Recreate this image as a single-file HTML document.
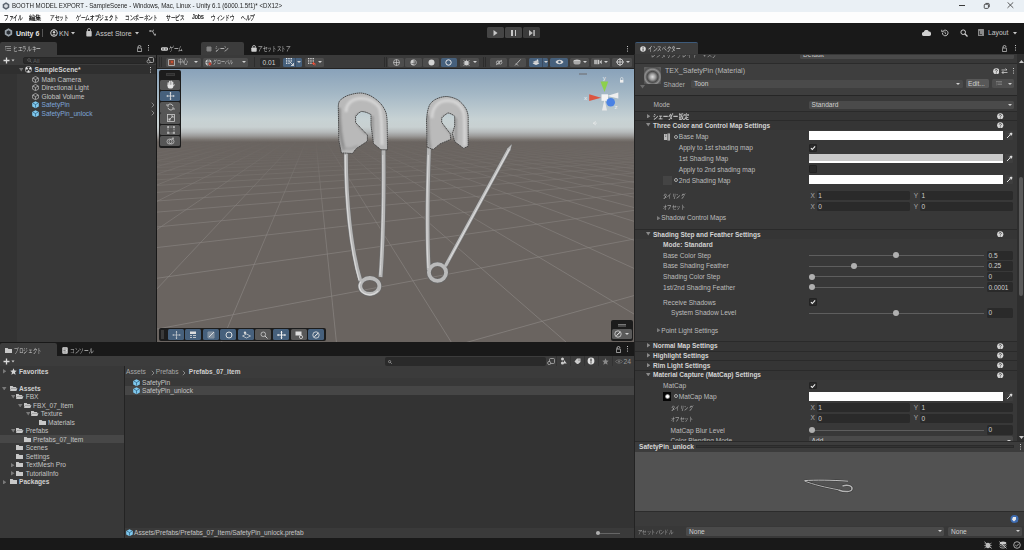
<!DOCTYPE html>
<html><head><meta charset="utf-8">
<style>
*{margin:0;padding:0;box-sizing:border-box}
html,body{width:1024px;height:550px;overflow:hidden;background:#191919;font-family:"Liberation Sans",sans-serif;font-size:6.6px;color:#c4c4c4}
.a{position:absolute}
.t{position:absolute;white-space:nowrap;line-height:1}
.b{font-weight:bold}
.btn{background:#4d4d4d;border-radius:1.5px}
.blue{background:#46607c}
.arr{width:0;height:0;border-left:2px solid transparent;border-right:2px solid transparent;border-top:2.5px solid #d0d0d0}
.jp{transform:scaleX(.73);transform-origin:0 0}
.dots{width:1.3px;height:1.3px;background:#c8c8c8;box-shadow:0 2.3px #c8c8c8,0 4.6px #c8c8c8}
</style></head><body>
<!-- ===== TITLE BAR ===== -->
<div class="a" style="left:0;top:0;width:1024px;height:12px;background:#eaf0f5"></div>
<svg class="a" style="left:2px;top:2px" width="8" height="8" viewBox="0 0 8 8"><path d="M4 .3 7.3 2.2v3.6L4 7.7.7 5.8V2.2z" fill="#5a6470"/><path d="M4 2 5.8 3v2L4 6 2.2 5V3z" fill="#d8dde2"/></svg>
<div class="t" style="left:12.3px;top:3.1px;font-size:7.1px;color:#1e1e1e;transform:scaleX(.865);transform-origin:0 0">BOOTH MODEL EXPORT - SampleScene - Windows, Mac, Linux - Unity 6.1 (6000.1.5f1)* &lt;DX12&gt;</div>
<div class="a" style="left:959.3px;top:5.2px;width:6.2px;height:.8px;background:#3a3a3a"></div>
<svg class="a" style="left:982.5px;top:2.3px" width="7.5" height="7" viewBox="0 0 9 8"><rect x="1.5" y="2.5" width="5" height="5" rx="1" fill="none" stroke="#333" stroke-width="1"/><path d="M3 1.5h3.5a1 1 0 0 1 1 1V6" fill="none" stroke="#333" stroke-width="1"/></svg>
<svg class="a" style="left:1007.3px;top:2.4px" width="6.8" height="6.2" viewBox="0 0 7 6.4"><path d="M.5.3 6.5 6.1M6.5.3.5 6.1" stroke="#3a3a3a" stroke-width=".85"/></svg>
<!-- ===== MENU BAR ===== -->
<div class="a" style="left:0;top:11.5px;width:1024px;height:11.5px;background:#fdfdfd"></div>
<div class="t" style="top:13.9px;font-size:7px;color:#000;-webkit-text-stroke:.15px #000;left:0;width:1024px">
<span class="t jp" style="left:4px;transform:scaleX(.67);transform-origin:0 0">ファイル</span><span class="t jp" style="left:29px;transform:scaleX(.9);transform-origin:0 0">編集</span><span class="t jp" style="left:49.6px;transform:scaleX(.67);transform-origin:0 0">アセット</span><span class="t jp" style="left:75.7px;transform:scaleX(.67);transform-origin:0 0">ゲームオブジェクト</span><span class="t jp" style="left:124.8px;transform:scaleX(.67);transform-origin:0 0">コンポーネント</span><span class="t jp" style="left:165.7px;transform:scaleX(.67);transform-origin:0 0">サービス</span><span class="t" style="left:191.8px;font-size:6.7px;top:0;transform:scaleX(.83);transform-origin:0 0">Jobs</span><span class="t jp" style="left:211px;transform:scaleX(.67);transform-origin:0 0">ウィンドウ</span><span class="t jp" style="left:241.4px;transform:scaleX(.67);transform-origin:0 0">ヘルプ</span>
</div>
<!-- ===== MAIN TOOLBAR ===== -->
<div class="a" style="left:0;top:23px;width:1024px;height:32px;background:#191919"></div>
<svg class="a" style="left:4px;top:28px" width="9" height="9" viewBox="0 0 9 9"><path d="M4.5 .3 8.2 2.4v4.2L4.5 8.7.8 6.6V2.4z" fill="#9aa3ab"/><path d="M4.5 2.2 6.5 3.4v2.2L4.5 6.8 2.5 5.6V3.4z" fill="#2b3036"/></svg>
<div class="t b" style="left:16px;top:29.5px;font-size:7px;color:#e4e4e4">Unity 6</div>
<div class="a" style="left:42px;top:29px;width:1px;height:8px;background:#555"></div>
<svg class="a" style="left:49.5px;top:28.5px" width="8" height="8" viewBox="0 0 8 8"><circle cx="4" cy="4" r="3.3" fill="none" stroke="#cfcfcf" stroke-width="1"/><circle cx="4" cy="3.2" r="1.2" fill="#cfcfcf"/><path d="M2 6.2c.6-1.2 3.4-1.2 4 0" fill="#cfcfcf"/></svg>
<div class="t" style="left:59px;top:29.5px;font-size:7px;color:#c8c8c8">KN</div>
<svg class="a" style="left:71px;top:31.5px" width="4" height="3" viewBox="0 0 4 3"><path d="M0 0h4L2 2.5z" fill="#c8c8c8"/></svg>
<svg class="a" style="left:86px;top:28px" width="6" height="9" viewBox="0 0 6 9"><path d="M1.5 3V2a1.5 1.5 0 0 1 3 0v1" fill="none" stroke="#c8c8c8" stroke-width=".8"/><rect x=".3" y="3" width="5.4" height="5.5" rx=".8" fill="#c8c8c8"/></svg>
<div class="t" style="left:95.5px;top:29.5px;font-size:7px;color:#c8c8c8">Asset Store</div>
<svg class="a" style="left:135px;top:31.5px" width="4" height="3" viewBox="0 0 4 3"><path d="M0 0h4L2 2.5z" fill="#c8c8c8"/></svg>
<svg class="a" style="left:148.5px;top:28.5px" width="8" height="8" viewBox="0 0 8 8"><path d="M1 2h2.5l2 4H7M3.5 2 5 .8M5.5 6 7 4.8" fill="none" stroke="#c8c8c8" stroke-width=".8"/><circle cx="1" cy="2" r=".8" fill="#c8c8c8"/></svg>
<!-- play controls -->
<div class="a" style="left:487px;top:27px;width:17px;height:11px;background:#454545;border-radius:1.5px"></div>
<div class="a" style="left:505px;top:27px;width:17px;height:11px;background:#454545;border-radius:1.5px"></div>
<div class="a" style="left:523px;top:27px;width:17px;height:11px;background:#3b3b3b;border-radius:1.5px"></div>
<svg class="a" style="left:493px;top:29.5px" width="5" height="6" viewBox="0 0 5 6"><path d="M.5 0 4.5 3 .5 6z" fill="#c8c8c8"/></svg>
<div class="a" style="left:511px;top:29.5px;width:1.6px;height:6px;background:#c8c8c8"></div>
<div class="a" style="left:514.5px;top:29.5px;width:1.6px;height:6px;background:#c8c8c8"></div>
<svg class="a" style="left:528.5px;top:29.5px" width="6" height="6" viewBox="0 0 6 6"><path d="M0 0 3.8 3 0 6z" fill="#bdbdbd"/><rect x="4.3" y="0" width="1.5" height="6" fill="#bdbdbd"/></svg>
<!-- right icons -->
<svg class="a" style="left:922px;top:29.5px" width="9" height="6" viewBox="0 0 9 6"><path d="M2 6a2 2 0 0 1-.2-4A2.6 2.6 0 0 1 6.8 1.6 2.2 2.2 0 0 1 7 6z" fill="#d0d0d0"/></svg>
<svg class="a" style="left:941px;top:28.5px" width="8" height="8" viewBox="0 0 8 8"><path d="M1.4 4A2.8 2.8 0 1 0 2.2 2" fill="none" stroke="#cfcfcf" stroke-width=".9"/><path d="M.8 .8v2h2" fill="none" stroke="#cfcfcf" stroke-width=".9"/><path d="M4 2.5V4.2l1 .8" fill="none" stroke="#cfcfcf" stroke-width=".8"/></svg>
<svg class="a" style="left:960px;top:28.5px" width="8" height="8" viewBox="0 0 8 8"><circle cx="3.2" cy="3.2" r="2.3" fill="none" stroke="#cfcfcf" stroke-width="1"/><path d="M4.8 4.8 7.5 7.5" stroke="#cfcfcf" stroke-width="1.3"/></svg>
<div class="a" style="left:977.5px;top:29px;width:6px;height:7px;background:#8a8a8a;border-radius:.5px"></div>
<div class="a" style="left:979px;top:30.5px;width:3px;height:4px;border-left:1px solid #444;border-bottom:1px solid #444"></div>
<div class="t" style="left:988px;top:29.5px;font-size:6.8px;color:#c8c8c8">Layout</div>
<svg class="a" style="left:1012.5px;top:31.5px" width="4" height="3" viewBox="0 0 4 3"><path d="M0 0h4L2 2.5z" fill="#c8c8c8"/></svg>
<!-- ===== TABS ===== -->
<div class="a" style="left:0;top:42px;width:57px;height:13px;background:#3c3c3c;border-radius:2px 2px 0 0"></div>
<svg class="a" style="left:5px;top:45.5px" width="6" height="6" viewBox="0 0 6 6"><path d="M0 .5h6M1.5 2.5h4.5M1.5 4.5h4.5M0 .5v4" stroke="#999" stroke-width=".8"/></svg>
<div class="t jp" style="left:13px;top:46px;font-size:6.5px;color:#d0d0d0;transform:scaleX(.67);transform-origin:0 0">ヒエラルキー</div>
<svg class="a" style="left:137px;top:45px" width="5" height="7" viewBox="0 0 5 7"><path d="M1 3V2a1.5 1.5 0 0 1 3 0" fill="none" stroke="#ccc" stroke-width=".8"/><rect x=".3" y="3" width="4.4" height="3.6" rx=".6" fill="none" stroke="#ccc" stroke-width=".8"/></svg>
<div class="a dots" style="left:148px;top:45px"></div>
<svg class="a" style="left:161px;top:46.5px" width="7" height="4" viewBox="0 0 7 4"><path d="M1.5.3h4a1.7 1.7 0 0 1 0 3.4h-4a1.7 1.7 0 0 1 0-3.4z" fill="#d0d0d0"/><circle cx="2" cy="2" r=".7" fill="#222"/><circle cx="5" cy="2" r=".7" fill="#222"/></svg>
<div class="t jp" style="left:169px;top:46px;font-size:6.5px;color:#d0d0d0;transform:scaleX(.67);transform-origin:0 0">ゲーム</div>
<div class="a" style="left:201px;top:42px;width:42.5px;height:13px;background:#3c3c3c;border-radius:2px 2px 0 0"></div>
<svg class="a" style="left:206px;top:45.5px" width="6" height="6" viewBox="0 0 6 6"><path d="M2 .2v5.6M4 .2v5.6M.2 2h5.6M.2 4h5.6" stroke="#b8b8b8" stroke-width=".7"/></svg>
<div class="t jp" style="left:214.5px;top:46px;font-size:6.5px;color:#d8d8d8;transform:scaleX(.67);transform-origin:0 0">シーン</div>
<svg class="a" style="left:251px;top:44.5px" width="6" height="7" viewBox="0 0 6 7"><path d="M1.5 2.5V2a1.5 1.5 0 0 1 3 0v.5" fill="none" stroke="#d0d0d0" stroke-width=".8"/><rect x=".3" y="2.5" width="5.4" height="4.3" rx=".8" fill="#d0d0d0"/></svg>
<div class="t jp" style="left:258px;top:46px;font-size:6.5px;color:#d0d0d0;transform:scaleX(.67);transform-origin:0 0">アセットストア</div>
<div class="a dots" style="left:626.7px;top:46px"></div>
<!-- inspector tab -->
<div class="a" style="left:635px;top:42px;width:62.5px;height:13px;background:#3c3c3c;border-top:1px solid #3d5a7a;border-radius:2px 2px 0 0"></div>
<svg class="a" style="left:640px;top:45.5px" width="6" height="6" viewBox="0 0 6 6"><circle cx="3" cy="3" r="2.8" fill="#ddd"/><rect x="2.6" y="2.4" width=".9" height="2.4" fill="#333"/><rect x="2.6" y="1.1" width=".9" height=".8" fill="#333"/></svg>
<div class="t jp" style="left:648px;top:46px;font-size:6.5px;color:#d8d8d8;transform:scaleX(.67);transform-origin:0 0">インスペクター</div>
<svg class="a" style="left:1001.5px;top:45px" width="5" height="7" viewBox="0 0 5 7"><path d="M1 3V2a1.5 1.5 0 0 1 3 0" fill="none" stroke="#ccc" stroke-width=".8"/><rect x=".3" y="3" width="4.4" height="3.6" rx=".6" fill="none" stroke="#ccc" stroke-width=".8"/></svg>
<div class="a dots" style="left:1015px;top:45px"></div>

<!-- ===== HIERARCHY ===== -->
<div class="a" style="left:0;top:55px;width:156px;height:10px;background:#3c3c3c"></div>
<div class="a" style="left:0;top:65px;width:156px;height:277px;background:#383838"></div>
<div class="a" style="left:0;top:74px;width:17px;height:268px;background:#333"></div>
<div class="a" style="left:0;top:65px;width:156px;height:9px;background:#2f2f2f"></div>
<div class="a" style="left:156px;top:42px;width:1px;height:300px;background:#191919"></div>
<svg class="a" style="left:3px;top:56.5px" width="12" height="7" viewBox="0 0 12 7"><path d="M3.5 .5v6M.5 3.5h6" stroke="#ddd" stroke-width="1.3"/><path d="M8.5 2.5h3l-1.5 2z" fill="#ccc"/></svg>
<div class="a" style="left:23px;top:56.5px;width:133px;height:7.5px;background:#2a2a2a;border-radius:2px;border:1px solid #252525"></div>
<svg class="a" style="left:26.5px;top:58px" width="5" height="5" viewBox="0 0 5 5"><circle cx="2" cy="2" r="1.4" fill="none" stroke="#666" stroke-width=".7"/><path d="M3 3 4.5 4.5" stroke="#666" stroke-width=".8"/></svg>
<div class="t" style="left:33px;top:57.5px;font-size:6px;color:#5e5e5e">All</div>
<svg class="a" style="left:145.5px;top:56.5px" width="8" height="7" viewBox="0 0 8 7"><rect x="2.5" y=".5" width="5" height="5" rx="1" fill="none" stroke="#bbb" stroke-width=".8"/><circle cx="2.5" cy="4.5" r="1.5" fill="#2a2a2a" stroke="#bbb" stroke-width=".7"/></svg>
<svg class="a" style="left:18.5px;top:68px" width="4.5" height="3.5" viewBox="0 0 4.5 3.5"><path d="M0 0h4.5L2.25 3.5z" fill="#777"/></svg>
<svg class="a" style="left:25px;top:66px" width="7" height="7" viewBox="0 0 7 7"><circle cx="3.5" cy="3.5" r="3.3" fill="#e0e0e0"/><path d="M3.5 3.5 2 .9A3 3 0 0 1 5 .9zM3.5 3.5h3A3 3 0 0 1 5 6.1zM3.5 3.5 2 6.1A3 3 0 0 1 .5 3.5z" fill="#2f2f2f"/><circle cx="3.5" cy="3.5" r=".8" fill="#2f2f2f"/></svg>
<div class="t b" style="left:34.5px;top:66.5px;font-size:6.7px;color:#d2d2d2">SampleScene*</div>
<div class="a dots" style="left:149.6px;top:67px"></div>
<svg width="0" height="0" style="position:absolute"><defs>
<g id="cubeo"><path d="M3.5 .5 6.4 2v3.2L3.5 6.7.6 5.2V2z" fill="none" stroke="#b0b0b0" stroke-width=".8"/><path d="M.8 2.1 3.5 3.6 6.2 2.1M3.5 3.6v3" fill="none" stroke="#b0b0b0" stroke-width=".8"/></g>
<g id="cubeb"><path d="M3.5 .2 6.8 1.9v3.6L3.5 7.2.2 5.5V1.9z" fill="#7ec8ee"/><path d="M1 2.2 3.5 3.5 6 2.2M3.5 3.5v3.2" fill="none" stroke="#2d5a78" stroke-width=".7"/></g>
<g id="fold"><path d="M0 1h2.6l.8.9H7V6H0z" fill="#c8c8c8"/></g>
<g id="foldo"><path d="M0 1h2.6l.8.9H6.2v1H1.3L0 6z" fill="#c8c8c8"/><path d="M1.2 3.3H7.5L6.3 6H0z" fill="#c8c8c8"/></g>
</defs></svg>
<svg class="a" style="left:32px;top:75.5px" width="7" height="7"><use href="#cubeo"/></svg>
<div class="t" style="left:41.5px;top:76.60px;font-size:6.6px;color:#c4c4c4">Main Camera</div>
<svg class="a" style="left:32px;top:84px" width="7" height="7"><use href="#cubeo"/></svg>
<div class="t" style="left:41.5px;top:85.10px;font-size:6.6px;color:#c4c4c4">Directional Light</div>
<svg class="a" style="left:32px;top:92.5px" width="7" height="7"><use href="#cubeo"/></svg>
<div class="t" style="left:41.5px;top:93.60px;font-size:6.6px;color:#c4c4c4">Global Volume</div>
<svg class="a" style="left:32px;top:101px" width="7" height="7.5"><use href="#cubeb"/></svg>
<div class="t" style="left:41.5px;top:102.10px;font-size:6.6px;color:#7fa6d8">SafetyPin</div>
<svg class="a" style="left:32px;top:109.5px" width="7" height="7.5"><use href="#cubeb"/></svg>
<div class="t" style="left:41.5px;top:110.60px;font-size:6.6px;color:#7fa6d8">SafetyPin_unlock</div>
<svg class="a" style="left:150.5px;top:101.5px" width="4" height="6" viewBox="0 0 4 6"><path d="M.7.7 3 3 .7 5.3" fill="none" stroke="#999" stroke-width=".8"/></svg>
<svg class="a" style="left:150.5px;top:110px" width="4" height="6" viewBox="0 0 4 6"><path d="M.7.7 3 3 .7 5.3" fill="none" stroke="#999" stroke-width=".8"/></svg>
<!-- ===== SCENE TOOLBAR ===== -->
<div class="a" style="left:157px;top:55px;width:477px;height:13px;background:#3a3a3a"></div>
<div class="a" style="left:159px;top:57px;width:3px;height:10px;border-left:1px solid #2c2c2c;border-right:1px solid #2c2c2c"></div>
<div class="a btn" style="left:166px;top:57.5px;width:34.5px;height:9px"></div>
<div class="a" style="left:168px;top:58.5px;width:7px;height:7px;background:#aaa;border-radius:1px"></div>
<div class="a" style="left:169px;top:59.5px;width:5px;height:5px;background:#7a4a3a"></div>
<div class="a" style="left:170.5px;top:61px;width:2px;height:2px;background:#e05030;border-radius:1px"></div>
<div class="t jp" style="left:178px;top:59px;font-size:6.5px;color:#d0d0d0">中心</div>
<div class="a arr" style="left:193.5px;top:61px"></div>
<div class="a btn" style="left:203px;top:57.5px;width:45px;height:9px"></div>
<svg class="a" style="left:205px;top:58.5px" width="7" height="7" viewBox="0 0 7 7"><circle cx="3.5" cy="3.5" r="3.1" fill="#ccc"/><path d="M3.5.4v6.2M.4 3.5h6.2M3.5.4c-1.6 1-1.6 5.2 0 6.2M3.5.4c1.6 1 1.6 5.2 0 6.2" fill="none" stroke="#555" stroke-width=".6"/><circle cx="5" cy="5" r="1.4" fill="#c04030"/></svg>
<div class="t jp" style="left:213px;top:59px;font-size:6.3px;color:#c8c8c8;transform:scaleX(.67);transform-origin:0 0">グローバル</div>
<div class="a arr" style="left:241.5px;top:61px"></div>
<div class="a" style="left:254px;top:57px;width:2px;height:10px;border-left:1px solid #2c2c2c"></div>
<div class="a" style="left:260px;top:57.5px;width:19.5px;height:9px;background:#2a2a2a;border-radius:1.5px"></div>
<div class="t" style="left:262.5px;top:59.5px;font-size:6.6px;color:#d0d0d0">0.01</div>
<div class="a btn blue" style="left:282.5px;top:57.5px;width:19.5px;height:9px"></div>
<svg class="a" style="left:285.5px;top:58.3px" width="8" height="8" viewBox="0 0 8 8"><g fill="#e8e8e8"><rect x="0" y="0" width="1.3" height="1.3"/><rect x="2.3" y="0" width="1.3" height="1.3"/><rect x="4.6" y="0" width="1.3" height="1.3"/><rect x="0" y="2.3" width="1.3" height="1.3"/><rect x="2.3" y="2.3" width="1.3" height="1.3"/><rect x="4.6" y="2.3" width="1.3" height="1.3"/><rect x="0" y="4.6" width="1.3" height="1.3"/><rect x="2.3" y="4.6" width="1.3" height="1.3"/></g><path d="M3.5 3.5 7.5 7.5M7.5 5v2.5H5" fill="none" stroke="#e8e8e8" stroke-width=".8"/></svg>
<div class="a" style="left:295px;top:57.5px;width:.7px;height:9px;background:#3a4a60"></div>
<div class="a arr" style="left:296.5px;top:61px"></div>
<div class="a btn" style="left:305px;top:57.5px;width:18.5px;height:9px"></div>
<svg class="a" style="left:308px;top:58.3px" width="8" height="8" viewBox="0 0 8 8"><g fill="#d8d8d8"><rect x="0" y="0" width="1.3" height="1.3"/><rect x="2.3" y="0" width="1.3" height="1.3"/><rect x="4.6" y="0" width="1.3" height="1.3"/><rect x="0" y="2.3" width="1.3" height="1.3"/><rect x="2.3" y="2.3" width="1.3" height="1.3"/><rect x="4.6" y="2.3" width="1.3" height="1.3"/><rect x="0" y="4.6" width="1.3" height="1.3"/><rect x="2.3" y="4.6" width="1.3" height="1.3"/></g><path d="M4 5.5h3v2M5.5 4v3" fill="none" stroke="#e0503a" stroke-width="1"/></svg>
<div class="a arr" style="left:317.5px;top:61px"></div>
<div class="a" style="left:384px;top:57px;width:3px;height:10px;border-left:1px solid #2c2c2c;border-right:1px solid #2c2c2c"></div>
<!-- shading btns -->
<div class="a btn" style="left:388px;top:57.5px;width:16.3px;height:9px"></div>
<div class="a btn" style="left:405.3px;top:57.5px;width:16.4px;height:9px"></div>
<div class="a btn" style="left:422.8px;top:57.5px;width:16.7px;height:9px"></div>
<div class="a btn blue" style="left:440.6px;top:57.5px;width:16.6px;height:9px"></div>
<div class="a btn" style="left:460px;top:57.5px;width:19px;height:9px"></div>
<svg class="a" style="left:392.5px;top:58.5px" width="7" height="7" viewBox="0 0 7 7"><circle cx="3.5" cy="3.5" r="3" fill="none" stroke="#ccc" stroke-width=".7"/><path d="M3.5.5v6M.5 3.5h6" stroke="#ccc" stroke-width=".7"/></svg>
<svg class="a" style="left:410px;top:58.5px" width="7" height="7" viewBox="0 0 7 7"><circle cx="3.5" cy="3.5" r="3" fill="#ccc"/><path d="M3.5 .5a3 3 0 0 1 0 6z" fill="#888"/><path d="M1.5 4.5h4v-2" fill="none" stroke="#555" stroke-width=".6"/></svg>
<svg class="a" style="left:427.5px;top:58.5px" width="7" height="7" viewBox="0 0 7 7"><circle cx="3.5" cy="3.5" r="3" fill="#d4d4d4"/></svg>
<svg class="a" style="left:445.3px;top:58.5px" width="7" height="7" viewBox="0 0 7 7"><circle cx="3.5" cy="3.5" r="2.7" fill="none" stroke="#e8e8e8" stroke-width="1"/><path d="M3.9 .8a2.7 2.7 0 0 1 1.6 4.4A2.6 2.6 0 0 0 3.9.8z" fill="#e8e8e8"/></svg>
<svg class="a" style="left:462.5px;top:58.5px" width="7" height="7" viewBox="0 0 7 7"><ellipse cx="3.5" cy="4" rx="2.2" ry="2.6" fill="#ccc"/><path d="M.5 1.5 2 2.5M6.5 1.5 5 2.5M.3 4h1.5M5.2 4h1.5M.5 6.5 2 5.5M6.5 6.5 5 5.5M3.5 .8v1" stroke="#ccc" stroke-width=".7"/></svg>
<div class="a arr" style="left:472.5px;top:61px"></div>
<div class="a" style="left:483px;top:57px;width:3px;height:10px;border-left:1px solid #2c2c2c;border-right:1px solid #2c2c2c"></div>
<div class="a btn" style="left:490px;top:57.5px;width:17px;height:9px"></div>
<div class="a btn" style="left:508.8px;top:57.5px;width:17.2px;height:9px"></div>
<div class="a btn blue" style="left:528.7px;top:57.5px;width:19.8px;height:9px"></div>
<div class="a btn blue" style="left:550px;top:57.5px;width:17.7px;height:9px"></div>
<div class="a btn" style="left:569.7px;top:57.5px;width:19.2px;height:9px"></div>
<div class="a btn" style="left:591px;top:57.5px;width:19px;height:9px"></div>
<div class="a btn" style="left:612px;top:57.5px;width:20px;height:9px"></div>
<svg class="a" style="left:494.5px;top:58.5px" width="8" height="7" viewBox="0 0 8 7"><path d="M1 6 7 1" stroke="#ccc" stroke-width=".7"/><circle cx="3" cy="3.5" r="1.6" fill="none" stroke="#ccc" stroke-width=".7"/><circle cx="5.3" cy="3.5" r="1.6" fill="none" stroke="#ccc" stroke-width=".7"/></svg>
<svg class="a" style="left:513.5px;top:58.5px" width="8" height="7" viewBox="0 0 8 7"><path d="M1 6.5 6.5.5M2 4.5l2 2" stroke="#ccc" stroke-width=".8"/></svg>
<svg class="a" style="left:531.5px;top:58.5px" width="8" height="7" viewBox="0 0 8 7"><path d="M.5 4.5 4 3l3.5 1.5L4 6z" fill="#ddd"/><path d="M.5 3 4 1.5 7.5 3 4 4.5z" fill="#ccc"/><path d="M5.5.3v2M4.5 1.3h2" stroke="#fff" stroke-width=".6"/></svg>
<div class="a" style="left:541.5px;top:57.5px;width:.7px;height:9px;background:#3a4a60"></div>
<div class="a arr" style="left:543.5px;top:61px"></div>
<svg class="a" style="left:554.5px;top:59px" width="9" height="6" viewBox="0 0 9 6"><path d="M.5 3C2.5 0 6.5 0 8.5 3 6.5 6 2.5 6 .5 3z" fill="#d8d8d8"/><circle cx="4.5" cy="3" r="1.3" fill="#46607c"/></svg>
<svg class="a" style="left:572.5px;top:59px" width="8" height="6" viewBox="0 0 8 6"><ellipse cx="4" cy="2" rx="3.5" ry="1.5" fill="#ccc"/><path d="M.5 2v2c0 2 7 2 7 0V2" fill="#aaa"/></svg>
<div class="a arr" style="left:582.5px;top:61px"></div>
<svg class="a" style="left:594px;top:59px" width="8" height="6" viewBox="0 0 8 6"><rect x=".3" y=".8" width="5" height="4.4" fill="#ccc"/><path d="M5.5 3 7.7.8v4.4z" fill="#ccc"/><path d="M2 .8v4.4M3.5.8v4.4" stroke="#555" stroke-width=".5"/></svg>
<div class="a arr" style="left:603.5px;top:61px"></div>
<svg class="a" style="left:615.5px;top:58px" width="8" height="8" viewBox="0 0 8 8"><circle cx="4" cy="4" r="3" fill="none" stroke="#ddd" stroke-width=".8"/><path d="M4 0v8M0 4h8" stroke="#ddd" stroke-width=".8"/></svg>
<div class="a arr" style="left:625.5px;top:61px"></div>
<!-- ===== SCENE VIEW ===== -->
<div class="a" style="left:157px;top:68px;width:477px;height:274px;overflow:hidden;background:linear-gradient(180deg,#88a1b9 0px,#a3b7c5 25px,#c7d2d4 51px,#c8d0d1 59px,#b6babb 64px,#9c9b9a 68px,#7c7773 71.5px,#6a6460 74px,#6a6460 100%)">
<svg class="a" style="left:0;top:0" width="477" height="274" viewBox="157 68 477 274">
<defs><linearGradient id="gfade" x1="0" y1="0" x2="0" y2="1" gradientUnits="userSpaceOnUse"  ><stop offset="0" stop-color="#fff" stop-opacity="0"/></linearGradient><mask id="gm" maskUnits="userSpaceOnUse" x="157" y="68" width="477" height="274"><rect x="157" y="68" width="477" height="274" fill="url(#gm2)"/></mask><linearGradient id="gm2" gradientUnits="userSpaceOnUse" x1="0" y1="139" x2="0" y2="342"><stop offset="0" stop-color="#fff" stop-opacity="0"/><stop offset=".05" stop-color="#fff" stop-opacity=".12"/><stop offset=".15" stop-color="#fff" stop-opacity=".4"/><stop offset=".3" stop-color="#fff" stop-opacity=".7"/><stop offset=".6" stop-color="#fff" stop-opacity=".9"/><stop offset="1" stop-color="#fff" stop-opacity="1"/></linearGradient></defs><g mask="url(#gm)" stroke="#8e8a86" stroke-width=".65"><line x1="270.2" y1="397.3" x2="696.1" y2="278.2" stroke-opacity="1.00"/><line x1="-44.7" y1="367.1" x2="697.1" y2="227.2" stroke-opacity="1.00"/><line x1="-42.8" y1="306.7" x2="700.0" y2="201.0" stroke-opacity="1.00"/><line x1="-41.7" y1="270.2" x2="699.8" y2="185.6" stroke-opacity="1.00"/><line x1="-49.9" y1="246.6" x2="699.6" y2="175.2" stroke-opacity="1.00"/><line x1="-48.1" y1="228.9" x2="699.5" y2="167.7" stroke-opacity="1.00"/><line x1="-46.7" y1="215.6" x2="699.5" y2="162.1" stroke-opacity="1.00"/><line x1="-45.7" y1="205.3" x2="699.4" y2="157.7" stroke-opacity="0.98"/><line x1="-44.8" y1="197.0" x2="699.4" y2="154.2" stroke-opacity="0.89"/><line x1="-49.0" y1="190.5" x2="699.3" y2="151.4" stroke-opacity="0.81"/><line x1="-48.0" y1="184.8" x2="699.3" y2="149.0" stroke-opacity="0.74"/><line x1="-47.2" y1="180.0" x2="699.3" y2="146.9" stroke-opacity="0.68"/><line x1="-46.5" y1="175.9" x2="700.0" y2="145.2" stroke-opacity="0.63"/><line x1="-49.5" y1="172.4" x2="699.9" y2="143.7" stroke-opacity="0.59"/><line x1="-48.7" y1="169.3" x2="699.8" y2="142.3" stroke-opacity="0.56"/><line x1="-48.0" y1="166.5" x2="699.8" y2="141.2" stroke-opacity="0.52"/><line x1="-47.4" y1="164.1" x2="699.7" y2="140.1" stroke-opacity="0.49"/><line x1="-49.7" y1="161.9" x2="699.7" y2="139.2" stroke-opacity="0.47"/><line x1="-49.1" y1="160.0" x2="699.7" y2="138.4" stroke-opacity="0.45"/><line x1="-48.5" y1="158.2" x2="699.6" y2="137.6" stroke-opacity="0.42"/><line x1="-48.0" y1="156.5" x2="699.6" y2="136.9" stroke-opacity="0.40"/><line x1="-49.9" y1="155.1" x2="700.0" y2="136.3" stroke-opacity="0.39"/><line x1="-49.4" y1="153.7" x2="700.0" y2="135.7" stroke-opacity="0.37"/><line x1="-48.9" y1="152.5" x2="699.9" y2="135.2" stroke-opacity="0.36"/><line x1="-48.4" y1="151.3" x2="699.9" y2="134.7" stroke-opacity="0.34"/><line x1="-48.0" y1="150.2" x2="699.8" y2="134.2" stroke-opacity="0.33"/><line x1="-49.5" y1="149.3" x2="699.8" y2="133.8" stroke-opacity="0.32"/><line x1="-49.1" y1="148.3" x2="699.8" y2="133.4" stroke-opacity="0.31"/><line x1="-48.7" y1="147.5" x2="699.8" y2="133.1" stroke-opacity="0.30"/><line x1="-48.3" y1="146.7" x2="699.7" y2="132.7" stroke-opacity="0.29"/><line x1="-49.7" y1="145.9" x2="699.7" y2="132.4" stroke-opacity="0.28"/><line x1="-49.3" y1="145.2" x2="700.0" y2="132.1" stroke-opacity="0.27"/><line x1="-48.9" y1="144.5" x2="700.0" y2="131.8" stroke-opacity="0.26"/><line x1="-48.6" y1="143.9" x2="699.9" y2="131.5" stroke-opacity="0.25"/><line x1="-49.8" y1="143.3" x2="699.9" y2="131.3" stroke-opacity="0.25"/><line x1="-49.5" y1="142.8" x2="699.9" y2="131.1" stroke-opacity="0.24"/><line x1="-49.1" y1="142.2" x2="699.9" y2="130.8" stroke-opacity="0.23"/><line x1="-48.8" y1="141.7" x2="699.8" y2="130.6" stroke-opacity="0.23"/><line x1="-49.9" y1="141.2" x2="699.8" y2="130.4" stroke-opacity="0.22"/><line x1="-49.6" y1="140.8" x2="699.8" y2="130.2" stroke-opacity="0.22"/><line x1="-49.3" y1="140.3" x2="699.8" y2="130.0" stroke-opacity="0.21"/><line x1="-49.0" y1="139.9" x2="700.0" y2="129.9" stroke-opacity="0.21"/><line x1="-50.0" y1="139.5" x2="700.0" y2="129.7" stroke-opacity="0.20"/><line x1="-49.7" y1="139.1" x2="699.9" y2="129.5" stroke-opacity="0.20"/><line x1="-49.4" y1="138.8" x2="699.9" y2="129.4" stroke-opacity="0.19"/><line x1="-49.1" y1="138.4" x2="699.9" y2="129.2" stroke-opacity="0.19"/><line x1="-48.9" y1="138.1" x2="699.9" y2="129.1" stroke-opacity="0.19"/><line x1="-49.8" y1="137.8" x2="699.9" y2="128.9" stroke-opacity="0.18"/><line x1="-49.5" y1="137.5" x2="699.8" y2="128.8" stroke-opacity="0.18"/><line x1="-49.3" y1="137.2" x2="699.8" y2="128.7" stroke-opacity="0.18"/><line x1="-49.0" y1="136.9" x2="700.0" y2="128.6" stroke-opacity="0.17"/><line x1="-49.8" y1="136.6" x2="700.0" y2="128.5" stroke-opacity="0.17"/><line x1="-49.6" y1="136.4" x2="700.0" y2="128.3" stroke-opacity="0.17"/><line x1="-49.4" y1="136.1" x2="699.9" y2="128.2" stroke-opacity="0.16"/><line x1="-49.1" y1="135.9" x2="699.9" y2="128.1" stroke-opacity="0.16"/><line x1="-49.9" y1="135.6" x2="699.9" y2="128.0" stroke-opacity="0.16"/><line x1="-49.7" y1="135.4" x2="699.9" y2="127.9" stroke-opacity="0.15"/><line x1="-49.4" y1="135.2" x2="699.9" y2="127.8" stroke-opacity="0.15"/><line x1="-49.2" y1="135.0" x2="699.9" y2="127.8" stroke-opacity="0.15"/><line x1="-49.9" y1="134.8" x2="699.8" y2="127.7" stroke-opacity="0.15"/><line x1="-99.1" y1="147.3" x2="290.9" y2="123.8"/><line x1="-99.8" y1="148.1" x2="291.6" y2="123.8"/><line x1="-99.5" y1="149.0" x2="292.3" y2="123.8"/><line x1="-99.2" y1="149.9" x2="293.1" y2="123.8"/><line x1="-99.9" y1="150.9" x2="293.8" y2="123.8"/><line x1="-99.6" y1="151.9" x2="294.6" y2="123.8"/><line x1="-99.3" y1="153.1" x2="295.3" y2="123.8"/><line x1="-98.9" y1="154.3" x2="296.0" y2="123.8"/><line x1="-99.7" y1="155.7" x2="296.8" y2="123.8"/><line x1="-99.4" y1="157.1" x2="297.5" y2="123.8"/><line x1="-98.9" y1="158.6" x2="298.2" y2="123.8"/><line x1="-99.9" y1="160.5" x2="298.9" y2="123.8"/><line x1="-99.5" y1="162.4" x2="299.7" y2="123.8"/><line x1="-99.0" y1="164.4" x2="300.4" y2="123.8"/><line x1="-98.4" y1="166.7" x2="301.1" y2="123.8"/><line x1="-99.7" y1="169.5" x2="301.8" y2="123.8"/><line x1="-99.1" y1="172.4" x2="302.6" y2="123.8"/><line x1="-98.4" y1="175.7" x2="303.3" y2="123.8"/><line x1="-99.9" y1="179.8" x2="304.0" y2="123.8"/><line x1="-99.2" y1="184.2" x2="304.7" y2="123.8"/><line x1="-98.4" y1="189.3" x2="305.5" y2="123.8"/><line x1="-97.5" y1="195.3" x2="306.2" y2="123.8"/><line x1="-99.5" y1="203.1" x2="306.9" y2="123.8"/><line x1="-98.4" y1="212.0" x2="307.6" y2="123.8"/><line x1="-97.1" y1="223.2" x2="308.3" y2="123.8"/><line x1="-99.9" y1="238.8" x2="309.0" y2="123.8"/><line x1="-98.4" y1="258.3" x2="309.7" y2="123.8"/><line x1="-96.3" y1="285.8" x2="310.5" y2="123.8"/><line x1="-93.1" y1="327.1" x2="311.2" y2="123.8"/><line x1="-87.7" y1="396.4" x2="311.9" y2="123.8"/><line x1="54.9" y1="397.1" x2="312.6" y2="123.8"/><line x1="198.1" y1="397.8" x2="313.3" y2="123.8"/><line x1="342.2" y1="398.6" x2="314.0" y2="123.8"/><line x1="487.0" y1="399.3" x2="314.7" y2="123.8"/><line x1="624.4" y1="392.9" x2="315.4" y2="123.8"/><line x1="766.9" y1="393.6" x2="316.1" y2="123.8"/><line x1="798.3" y1="343.3" x2="316.8" y2="123.8"/><line x1="794.6" y1="299.4" x2="317.5" y2="123.8"/><line x1="798.8" y1="272.2" x2="318.2" y2="123.8"/><line x1="796.0" y1="250.6" x2="318.9" y2="123.8"/><line x1="799.0" y1="235.7" x2="319.6" y2="123.8"/><line x1="796.8" y1="222.9" x2="320.3" y2="123.8"/><line x1="799.2" y1="213.5" x2="321.0" y2="123.8"/><line x1="797.3" y1="205.0" x2="321.7" y2="123.8"/><line x1="799.3" y1="198.6" x2="322.4" y2="123.8"/><line x1="797.7" y1="192.6" x2="323.1" y2="123.8"/><line x1="799.3" y1="187.9" x2="323.8" y2="123.8"/><line x1="798.0" y1="183.4" x2="324.5" y2="123.8"/><line x1="799.4" y1="179.8" x2="325.2" y2="123.8"/><line x1="798.2" y1="176.3" x2="325.9" y2="123.8"/><line x1="799.4" y1="173.5" x2="326.5" y2="123.8"/><line x1="798.3" y1="170.7" x2="327.2" y2="123.8"/><line x1="799.5" y1="168.4" x2="327.9" y2="123.8"/><line x1="798.5" y1="166.2" x2="328.6" y2="123.8"/><line x1="799.5" y1="164.3" x2="329.3" y2="123.8"/><line x1="798.6" y1="162.4" x2="330.0" y2="123.8"/><line x1="799.5" y1="160.8" x2="330.6" y2="123.8"/><line x1="798.7" y1="159.2" x2="331.3" y2="123.8"/><line x1="799.5" y1="157.9" x2="332.0" y2="123.8"/><line x1="798.8" y1="156.5" x2="332.7" y2="123.8"/><line x1="799.5" y1="155.4" x2="333.4" y2="123.8"/><line x1="798.8" y1="154.2" x2="334.0" y2="123.8"/><line x1="799.6" y1="153.2" x2="334.7" y2="123.8"/><line x1="798.9" y1="152.2" x2="335.4" y2="123.8"/><line x1="799.6" y1="151.3" x2="336.1" y2="123.7"/><line x1="798.9" y1="150.4" x2="336.7" y2="123.7"/><line x1="799.6" y1="149.6" x2="337.4" y2="123.7"/><line x1="799.0" y1="148.8" x2="338.1" y2="123.7"/><line x1="799.6" y1="148.1" x2="338.7" y2="123.7"/><line x1="799.0" y1="147.4" x2="339.4" y2="123.7"/></g>
<g id="pins">
<defs>
<linearGradient id="hg" x1="0" y1="0" x2="1" y2="0"><stop offset="0" stop-color="#9c9c9c"/><stop offset=".25" stop-color="#c4c4c4"/><stop offset=".55" stop-color="#b6b6b6"/><stop offset=".8" stop-color="#cdcdcd"/><stop offset="1" stop-color="#a0a0a0"/></linearGradient>
</defs>
<!-- pin1 wires -->
<g fill="none">
<path d="M346 150 C345.5 200, 351 250, 360.5 281" stroke="#6a6a6a" stroke-width="4.8"/>
<path d="M383.5 150 C384 200, 382.5 250, 380.5 277" stroke="#6a6a6a" stroke-width="4.8"/>
<ellipse cx="369.8" cy="286" rx="9.6" ry="8" stroke="#666" stroke-width="5"/>
<path d="M346 150 C345.5 200, 351 250, 360.5 281" stroke="#b6b6b6" stroke-width="3.7"/>
<path d="M383.5 150 C384 200, 382.5 250, 380.5 277" stroke="#b6b6b6" stroke-width="3.7"/>
<ellipse cx="369.8" cy="286" rx="9.6" ry="8" stroke="#bababa" stroke-width="3.8"/>
<path d="M345.3 155 C345 200, 350 248, 359 280" stroke="#dadada" stroke-width="1.1"/>
<path d="M382.8 155 C383.2 200, 381.8 250, 380 275" stroke="#d6d6d6" stroke-width="1"/>
<path d="M361 281.5 A9.6 8 0 0 0 378 291" stroke="#dddddd" stroke-width="1.1"/>
</g>
<!-- pin1 head -->
<defs><path id="h1" d="M341.4 152.9L338.8 140L338.3 106.5C338.5 102 339.5 100.5 340.8 99.7C344 97 347 95.5 350 94.8C353.5 93.7 357 93 360.6 93C364 93.2 368 94.5 371 96C375 98.5 378.5 101 381 104C383.5 107 385 110 386 112.7C386.8 116 387.2 120 387.2 125L387.5 149.8L381 149.8L373.5 143.6L371 125L371 114.6C368 112.8 364.5 111.5 361.2 111.5C359 112.5 357 114.5 355.6 116.4L355.6 122.6L367.4 135L367.4 141.2L356.2 148.6L352.5 153.5Z"/></defs><use href="#h1" fill="#b9b9b9"/>
<clipPath id="c1"><use href="#h1"/></clipPath>
<g clip-path="url(#c1)" filter="url(#bl)">
<path d="M339 108C339 125 341 140 344 150" stroke="#8e8e8e" stroke-width="3.5" fill="none"/>
<path d="M346 112C346 104 352 99 360 98.5C368 98 374 101 379 107C382 112 381.5 125 382 145" stroke="#d6d6d6" stroke-width="3" fill="none"/>
<path d="M356 117C358 113.5 362 113 366 113.5" stroke="#8a8a8a" stroke-width="2" fill="none"/>
<path d="M372.5 116 L372.8 140" stroke="#909090" stroke-width="2" fill="none"/>
<path d="M357 124L366 134" stroke="#9a9a9a" stroke-width="2" fill="none"/>
<path d="M343 147C348 150 352 149 358 146" stroke="#a0a0a0" stroke-width="2" fill="none"/>
</g>
<use href="#h1" fill="none" stroke="#3e3e3e" stroke-width=".9" stroke-dasharray="1.6 .5"/>
<!-- pin2 wires -->
<g fill="none">
<path d="M429 148 C427.5 190, 427 240, 428.8 270" stroke="#6a6a6a" stroke-width="4.8"/>
<path d="M508.5 150 L446 265" stroke="#6a6a6a" stroke-width="4.2" stroke-linecap="round"/><path d="M512.2 143.5 L506.3 148.6 L510.8 151.2z" fill="#6a6a6a"/>
<ellipse cx="437.5" cy="272.5" rx="8.6" ry="8.4" stroke="#666" stroke-width="5"/>
<path d="M429 148 C427.5 190, 427 240, 428.8 270" stroke="#b6b6b6" stroke-width="3.7"/>
<path d="M508.5 150 L446 265" stroke="#bcbcbc" stroke-width="3.2" stroke-linecap="round"/><path d="M511.8 144.3 L507 149 L510.2 150.7z" fill="#bcbcbc"/>
<ellipse cx="437.5" cy="272.5" rx="8.6" ry="8.4" stroke="#bababa" stroke-width="3.8"/>
<path d="M428.3 155 C427 190, 426.5 240, 428 268" stroke="#d8d8d8" stroke-width="1.1"/>
<path d="M509.5 149 L449 260" stroke="#dedede" stroke-width="1"/>
</g>
<!-- pin2 head -->
<defs><path id="h2" d="M427.1 147.2L426.5 120.2C427 113 428 108 429.9 104.4C432 101.5 434 100 436.7 98.8C440 97.3 443.5 96.5 446.8 96.5C450.5 96.8 454.5 98 458 99.9C461.5 102.5 464 105.5 466 108.9C467.3 111.5 468 114 468.2 116.8L468.2 146.1L463.7 148.4L454.7 141.6L452.4 133.7L454.7 125.8L454.7 116.2C452.5 114.5 450 113.2 447.9 112.9C445.5 114.5 443.5 116 441.7 117.9L441.7 122.4L450.2 133.7L450.7 139.4L440 143.9L433.3 149.5Z"/></defs><use href="#h2" fill="#bababa"/>
<clipPath id="c2"><use href="#h2"/></clipPath>
<g clip-path="url(#c2)" filter="url(#bl)">
<path d="M427.5 115C427.5 128 428 140 430 148" stroke="#949494" stroke-width="3" fill="none"/>
<path d="M432 118C432 108 438 101 447 100.5C455 100.5 461 105 463.5 112C465 118 464.5 132 464.5 146" stroke="#d6d6d6" stroke-width="2.8" fill="none"/>
<path d="M442.5 118C444.5 115.5 447 115 450 115.5" stroke="#8c8c8c" stroke-width="1.8" fill="none"/>
<path d="M455.8 118 L455.8 141" stroke="#8e8e8e" stroke-width="1.8" fill="none"/>
<path d="M443 124L450 133" stroke="#9a9a9a" stroke-width="1.8" fill="none"/>
</g>
<use href="#h2" fill="none" stroke="#3e3e3e" stroke-width=".9" stroke-dasharray="1.6 .5"/>
</g>
<filter id="bl" x="-20%" y="-20%" width="140%" height="140%"><feGaussianBlur stdDeviation="1"/></filter>
</svg>
</div>
<div class="a" style="left:157px;top:68px;width:477px;height:1px;background:#232323"></div>
<!-- tool palette -->
<div class="a" style="left:159px;top:70px;width:22px;height:77.5px;background:#1c1c1c;border-radius:2px"></div>
<div class="a" style="left:166px;top:72.8px;width:9px;height:3px;background:#2c2c2c;border:.5px solid #3a3a3a"></div>
<div class="a btn" style="left:160.1px;top:79.7px;width:19.9px;height:10.2px;background:#565656"></div>
<div class="a btn blue" style="left:160.1px;top:90.6px;width:19.9px;height:10.8px"></div>
<div class="a btn" style="left:160.1px;top:102px;width:19.9px;height:10.6px;background:#565656"></div>
<div class="a btn" style="left:160.1px;top:113.3px;width:19.9px;height:10.6px;background:#565656"></div>
<div class="a btn" style="left:160.1px;top:124.6px;width:19.9px;height:10.6px;background:#565656"></div>
<div class="a btn" style="left:160.1px;top:135.9px;width:19.9px;height:10.6px;background:#565656"></div>
<svg class="a" style="left:166px;top:80.3px" width="9" height="9" viewBox="0 0 9 9"><g fill="#e6e6e6"><rect x="1.6" y="2.2" width="1.2" height="4" rx=".6"/><rect x="3.1" y=".8" width="1.2" height="4.5" rx=".6"/><rect x="4.6" y=".6" width="1.2" height="4.7" rx=".6"/><rect x="6.1" y="1.4" width="1.2" height="4.2" rx=".6"/><path d="M1.6 4.8h5.7V6.4C7.3 8 6 8.6 4.5 8.6S1.6 8 1.6 6.4z"/><path d="M7.3 5.3 8.4 4.2 8.8 4.7 7.5 6.6z"/></g></svg>
<svg class="a" style="left:166px;top:91.5px" width="9" height="8" viewBox="0 0 9 8"><path d="M4.5 .5v7M1 4h7" stroke="#e4e4e4" stroke-width=".8"/><path d="M4.5 0 3.3 1.3h2.4zM4.5 8 3.3 6.7h2.4zM.3 4l1.3-1.2v2.4zM8.7 4 7.4 2.8v2.4z" fill="#e4e4e4"/></svg>
<svg class="a" style="left:166px;top:103px" width="9" height="8" viewBox="0 0 9 8"><path d="M7 3.2A2.8 2.8 0 0 0 2 2.2M2 4.8A2.8 2.8 0 0 0 7 5.8" fill="none" stroke="#ccc" stroke-width=".9"/><path d="M1 1v2h2M8 7V5H6" fill="none" stroke="#ccc" stroke-width=".8"/></svg>
<svg class="a" style="left:166.5px;top:114px" width="8" height="8" viewBox="0 0 8 8"><rect x=".5" y=".5" width="7" height="7" fill="none" stroke="#ccc" stroke-width=".8"/><path d="M2.5 5.5 6 2M4 2h2v2" fill="none" stroke="#ccc" stroke-width=".8"/><rect x="1.5" y="4.5" width="2" height="2" fill="#ccc"/></svg>
<svg class="a" style="left:166.5px;top:125.5px" width="8" height="8" viewBox="0 0 8 8"><rect x="1" y="1" width="6" height="6" fill="none" stroke="#ccc" stroke-width=".7" stroke-dasharray="1 .6"/><rect x=".2" y=".2" width="1.6" height="1.6" fill="#ccc"/><rect x="6.2" y=".2" width="1.6" height="1.6" fill="#ccc"/><rect x=".2" y="6.2" width="1.6" height="1.6" fill="#ccc"/><rect x="6.2" y="6.2" width="1.6" height="1.6" fill="#ccc"/></svg>
<svg class="a" style="left:166px;top:136.5px" width="9" height="8" viewBox="0 0 9 8"><circle cx="3.5" cy="4.5" r="2.5" fill="none" stroke="#ccc" stroke-width=".7"/><circle cx="5.5" cy="4.5" r="2.5" fill="none" stroke="#ccc" stroke-width=".7"/><path d="M7 .3v2M6 1.3h2" stroke="#ccc" stroke-width=".6"/></svg>
<!-- gizmo -->
<div class="a" style="left:579px;top:73px;width:8.2px;height:2.3px;background:#7d8894"></div>
<svg class="a" style="left:580px;top:73px" width="50" height="56" viewBox="580 73 50 56">
<text x="602.8" y="80" font-size="6" fill="#f0f0f0" font-family="Liberation Sans">y</text>
<path d="M600.5 81.5 608.2 81.5 604.5 92z" fill="#8dd04c"/>
<text x="584" y="100" font-size="6" fill="#f0f0f0" font-family="Liberation Sans">x</text>
<path d="M589.2 94.3 589.2 101 601 97.7z" fill="#dc5540"/>
<path d="M618.3 92.5 618.3 98.5 607 96z" fill="#eeeeee"/>
<path d="M602 110.5 607 110.5 604.5 99z" fill="#e8e8e8"/>
<rect x="601.5" y="94.3" width="6.5" height="6.5" fill="#f4f4f4"/>
<circle cx="610.7" cy="102.3" r="4.3" fill="#4a82e4"/>
<text x="614.5" y="109" font-size="6" fill="#f0f0f0" font-family="Liberation Sans">z</text>
<path d="M620.5 80v-1.3a1.2 1.2 0 0 1 2.4 0V80" fill="none" stroke="#eee" stroke-width=".6"/><rect x="620" y="80" width="3.4" height="2.6" fill="#eee"/>
<path d="M596 121.5 593 123.2 596 125" fill="none" stroke="#eee" stroke-width=".6"/><path d="M594 123.2h3" stroke="#eee" stroke-width=".5"/>
</svg>
<!-- bottom-left overlay -->
<div class="a" style="left:159px;top:327.5px;width:167px;height:13px;background:#1c1c1c;border-radius:2px"></div>
<div class="a" style="left:160.5px;top:329.5px;width:3.5px;height:9px;background:#3a3a3a"></div>
<div class="a btn blue" style="left:167.6px;top:328.5px;width:16.4px;height:11px"></div>
<div class="a btn blue" style="left:185.3px;top:328.5px;width:15.7px;height:11px"></div>
<div class="a btn blue" style="left:202.5px;top:328.5px;width:16.1px;height:11px"></div>
<div class="a btn blue" style="left:220px;top:328.5px;width:16.3px;height:11px"></div>
<div class="a btn blue" style="left:237.8px;top:328.5px;width:16.2px;height:11px"></div>
<div class="a btn" style="left:255.4px;top:328.5px;width:16.1px;height:11px;background:#585858"></div>
<div class="a btn blue" style="left:273px;top:328.5px;width:16px;height:11px"></div>
<div class="a btn" style="left:290.6px;top:328.5px;width:16.2px;height:11px;background:#585858"></div>
<div class="a btn blue" style="left:308px;top:328.5px;width:16.4px;height:11px"></div>
<svg class="a" style="left:171.5px;top:330.5px" width="9" height="8" viewBox="0 0 9 8"><path d="M4.5 .5v7M1 4h7" stroke="#ddd" stroke-width=".6"/><path d="M4.5 0 3.5 1.2h2zM4.5 8 3.5 6.8h2zM.3 4l1.2-1v2zM8.7 4 7.5 3v2z" fill="#ddd"/></svg>
<svg class="a" style="left:189px;top:330.5px" width="9" height="8" viewBox="0 0 9 8"><rect x="1" y=".5" width="6" height="2.5" fill="#ddd"/><path d="M1 4.5h2M4 4.5h3M1 6.5h2M4 6.5h3" stroke="#ddd" stroke-width=".8"/></svg>
<svg class="a" style="left:206.5px;top:330.5px" width="9" height="8" viewBox="0 0 9 8"><path d="M1 1h6M1 3h6M1 5h6M1 7h6M1 1v6M3 1v6M5 1v6M7 1v6" stroke="#ccc" stroke-width=".5"/><path d="M2 6 7 1" stroke="#eee" stroke-width=".8"/></svg>
<svg class="a" style="left:224.5px;top:330.5px" width="8" height="8" viewBox="0 0 8 8"><circle cx="4" cy="4" r="3" fill="none" stroke="#e8e8e8" stroke-width=".9"/><path d="M4.5 1.2a3 3 0 0 1 1.5 5A2.8 2.8 0 0 0 4.5 1.2z" fill="#e8e8e8"/></svg>
<svg class="a" style="left:242px;top:330.5px" width="9" height="8" viewBox="0 0 9 8"><path d="M.5 5 4.5 3 8.5 5 4.5 7z" fill="none" stroke="#ddd" stroke-width=".7"/><circle cx="3" cy="1.8" r="1.2" fill="#ddd"/></svg>
<svg class="a" style="left:259.5px;top:330.5px" width="8" height="8" viewBox="0 0 8 8"><circle cx="3.3" cy="3.3" r="2.3" fill="none" stroke="#ccc" stroke-width=".8"/><path d="M5 5 7.5 7.5" stroke="#ccc" stroke-width="1"/></svg>
<svg class="a" style="left:276.5px;top:330.5px" width="9" height="8" viewBox="0 0 9 8"><path d="M4.5 0v8M.5 4h8" stroke="#eee" stroke-width="1"/><path d="M4.5 0 3.3 1.5h2.4zM4.5 8 3.3 6.5h2.4zM0 4l1.5-1.2v2.4zM9 4 7.5 2.8v2.4z" fill="#eee"/></svg>
<svg class="a" style="left:294.5px;top:330.5px" width="9" height="8" viewBox="0 0 9 8"><rect x=".5" y=".5" width="6" height="4" fill="#ddd"/><circle cx="6" cy="6" r="1.6" fill="none" stroke="#ddd" stroke-width=".8"/></svg>
<svg class="a" style="left:312px;top:330.5px" width="8" height="8" viewBox="0 0 8 8"><circle cx="4" cy="4" r="3.2" fill="none" stroke="#e4e4e4" stroke-width=".8"/><path d="M2.5 5.5 5.8 2.2 4.5 4z" fill="none" stroke="#e4e4e4" stroke-width=".9"/></svg>
<!-- bottom-right overlay -->
<div class="a" style="left:610.5px;top:320px;width:22px;height:21px;background:#1c1c1c;border-radius:2px"></div>
<div class="a" style="left:617.5px;top:323.5px;width:8px;height:.8px;background:#777;box-shadow:0 1.5px #777"></div>
<div class="a btn" style="left:612px;top:328.5px;width:19.5px;height:10px;background:#5a5a5a"></div>
<svg class="a" style="left:613.5px;top:329.5px" width="8" height="8" viewBox="0 0 8 8"><circle cx="4" cy="4" r="3.2" fill="none" stroke="#ddd" stroke-width=".8"/><path d="M2.5 5.5 5.8 2.2 4.5 4z" fill="none" stroke="#ddd" stroke-width=".9"/></svg>
<div class="a arr" style="left:625px;top:333px"></div>
<div class="a" style="left:634px;top:42px;width:1px;height:496px;background:#191919"></div>
<!-- ===== PROJECT ===== -->
<div class="a" style="left:0;top:342px;width:634px;height:14px;background:#191919"></div>
<div class="a" style="left:0;top:343px;width:57px;height:13px;background:#3c3c3c;border-radius:2px 2px 0 0"></div>
<svg class="a" style="left:5px;top:347px" width="7" height="6" viewBox="0 0 7 6"><use href="#fold"/></svg>
<div class="t jp" style="left:13.5px;top:347.60px;font-size:6.5px;color:#d0d0d0;transform:scaleX(.67);transform-origin:0 0">プロジェクト</div>
<svg class="a" style="left:62px;top:346.5px" width="6" height="7" viewBox="0 0 6 7"><rect x=".3" y=".3" width="5.4" height="6.4" rx=".8" fill="#ddd"/><path d="M1.3 2h3.4M1.3 3.5h2.4M1.3 5h3.4" stroke="#444" stroke-width=".6"/></svg>
<div class="t jp" style="left:70px;top:347.60px;font-size:6.5px;color:#d0d0d0;transform:scaleX(.67);transform-origin:0 0">コンソール</div>
<svg class="a" style="left:615.5px;top:345.5px" width="5" height="7" viewBox="0 0 5 7"><path d="M1 3V2a1.5 1.5 0 0 1 3 0" fill="none" stroke="#ccc" stroke-width=".8"/><rect x=".3" y="3" width="4.4" height="3.6" rx=".6" fill="none" stroke="#ccc" stroke-width=".8"/></svg>
<div class="a dots" style="left:627px;top:345.5px"></div>
<div class="a" style="left:0;top:356px;width:634px;height:10px;background:#3c3c3c"></div>
<svg class="a" style="left:3px;top:357.5px" width="12" height="7" viewBox="0 0 12 7"><path d="M3.5 .5v6M.5 3.5h6" stroke="#ddd" stroke-width="1.3"/><path d="M8.5 2.5h3l-1.5 2z" fill="#ccc"/></svg>
<div class="a" style="left:385px;top:357.2px;width:161px;height:8.5px;background:#2a2a2a;border-radius:2px"></div>
<svg class="a" style="left:388px;top:359.5px" width="4" height="4" viewBox="0 0 4 4"><circle cx="1.6" cy="1.6" r="1.1" fill="none" stroke="#bbb" stroke-width=".6"/><path d="M2.4 2.4 3.7 3.7" stroke="#bbb" stroke-width=".7"/></svg>
<svg class="a" style="left:547px;top:357.5px" width="8" height="7" viewBox="0 0 8 7"><rect x="2.5" y=".5" width="5" height="5" rx="1" fill="none" stroke="#bbb" stroke-width=".7"/><circle cx="2.2" cy="5" r="1.6" fill="#3c3c3c" stroke="#bbb" stroke-width=".7"/></svg>
<div class="a" style="left:556px;top:356px;width:1px;height:10px;background:#333"></div>
<svg class="a" style="left:559.5px;top:357px" width="7" height="8" viewBox="0 0 7 8"><circle cx="2.5" cy="2" r="1.5" fill="#ccc"/><circle cx="2.5" cy="6" r="1.6" fill="#ccc"/><path d="M4 3 6.8 6.5H4z" fill="#ccc"/></svg>
<div class="a" style="left:570px;top:356px;width:1px;height:10px;background:#333"></div>
<svg class="a" style="left:573.5px;top:358px" width="7" height="6" viewBox="0 0 7 6"><path d="M3 .5h3.5V4L3.5 6.5.5 3.5z" fill="#ccc"/><circle cx="5" cy="2" r=".6" fill="#3c3c3c"/></svg>
<div class="a" style="left:583.5px;top:356px;width:1px;height:10px;background:#333"></div>
<svg class="a" style="left:587px;top:357px" width="8" height="8" viewBox="0 0 8 8"><circle cx="4" cy="4" r="3.4" fill="#e0e0e0"/><rect x="3.4" y="1.6" width="1.2" height="3" fill="#3c3c3c"/><rect x="3.4" y="5.3" width="1.2" height="1.1" fill="#3c3c3c"/></svg>
<div class="a" style="left:597.5px;top:356px;width:1px;height:10px;background:#333"></div>
<svg class="a" style="left:601.5px;top:357.5px" width="7" height="7" viewBox="0 0 7 7"><path d="M3.5.3l1 2.2 2.3.2-1.8 1.6.6 2.4-2.1-1.3-2.1 1.3.6-2.4L.2 2.7l2.3-.2z" fill="#8a8a8a"/></svg>
<div class="a" style="left:611.5px;top:356px;width:1px;height:10px;background:#333"></div>
<svg class="a" style="left:615px;top:359px" width="8" height="5" viewBox="0 0 8 5"><path d="M.5 2.5C2 .3 6 .3 7.5 2.5 6 4.7 2 4.7.5 2.5z" fill="none" stroke="#777" stroke-width=".7"/><circle cx="4" cy="2.5" r="1" fill="#777"/></svg>
<div class="t" style="left:623.5px;top:358.60px;font-size:6.8px;color:#999">24</div>
<div class="a" style="left:0;top:366px;width:123.5px;height:172px;background:#383838"></div>
<div class="a" style="left:123.5px;top:366px;width:1px;height:172px;background:#232323"></div>
<div class="a" style="left:124.5px;top:366px;width:509.5px;height:161.5px;background:#333333"></div>
<div class="a" style="left:124.5px;top:366px;width:509.5px;height:11.5px;background:#3b3b3b"></div>
<div class="a" style="left:124.5px;top:377.5px;width:509.5px;height:8.5px;background:#383838"></div>
<div class="a" style="left:124.5px;top:386px;width:509.5px;height:8.7px;background:#464646"></div>
<div class="t" style="left:126px;top:369.10px;font-size:6.6px;color:#a8a8a8">Assets</div>
<svg class="a" style="left:150.5px;top:369.5px" width="4" height="6" viewBox="0 0 4 6"><path d="M.8.8 3 3 .8 5.2" fill="none" stroke="#9a9a9a" stroke-width=".8"/></svg>
<div class="t" style="left:155.8px;top:369.10px;font-size:6.6px;color:#a8a8a8">Prefabs</div>
<svg class="a" style="left:182px;top:369.5px" width="4" height="6" viewBox="0 0 4 6"><path d="M.8.8 3 3 .8 5.2" fill="none" stroke="#9a9a9a" stroke-width=".8"/></svg>
<div class="t b" style="left:188.8px;top:369.10px;font-size:6.5px;color:#cfcfcf">Prefabs_07_Item</div>
<svg class="a" style="left:133px;top:378.5px" width="7" height="7.5"><use href="#cubeb"/></svg>
<div class="t" style="left:142px;top:379.60px;font-size:6.6px;color:#c4c4c4">SafetyPin</div>
<svg class="a" style="left:133px;top:387px" width="7" height="7.5"><use href="#cubeb"/></svg>
<div class="t" style="left:142px;top:388.10px;font-size:6.6px;color:#c4c4c4">SafetyPin_unlock</div>
<div class="a" style="left:124.5px;top:527.5px;width:509.5px;height:10.5px;background:#3a3a3a"></div>
<svg class="a" style="left:125.5px;top:528.5px" width="7" height="7.5"><use href="#cubeb"/></svg>
<div class="t" style="left:134px;top:530.10px;font-size:6.6px;color:#c4c4c4">Assets/Prefabs/Prefabs_07_Item/SafetyPin_unlock.prefab</div>
<div class="a" style="left:596px;top:532.5px;width:24px;height:.8px;background:#666"></div>
<div class="a" style="left:595.5px;top:530.5px;width:4.6px;height:4.6px;border-radius:50%;background:#b0b0b0"></div>
<!-- tree -->
<div class="a" style="left:0;top:435px;width:123.5px;height:8.3px;background:#474747"></div>
<svg class="a" style="left:2.5px;top:369.2px" width="3.5" height="4.5" viewBox="0 0 3.5 4.5"><path d="M0 0v4.5L3.5 2.25z" fill="#7a7a7a"/></svg>
<svg class="a" style="left:9.5px;top:368.0px" width="7" height="7" viewBox="0 0 7 7"><path d="M3.5.3l1 2.2 2.3.2-1.8 1.6.6 2.4-2.1-1.3-2.1 1.3.6-2.4L.2 2.7l2.3-.2z" fill="#d4d4d4"/></svg>
<div class="t b" style="left:19px;top:368.90px;font-size:6.6px;color:#d0d0d0">Favorites</div>
<svg class="a" style="left:2px;top:386.5px" width="4.5" height="3.5" viewBox="0 0 4.5 3.5"><path d="M0 0h4.5L2.25 3.5z" fill="#7a7a7a"/></svg>
<svg class="a" style="left:9.5px;top:384.8px" width="8" height="7" viewBox="0 0 8 7"><use href="#foldo"/></svg>
<div class="t b" style="left:19px;top:385.70px;font-size:6.6px;color:#d0d0d0">Assets</div>
<svg class="a" style="left:10.5px;top:395.0px" width="4.5" height="3.5" viewBox="0 0 4.5 3.5"><path d="M0 0h4.5L2.25 3.5z" fill="#7a7a7a"/></svg>
<svg class="a" style="left:16.2px;top:393.3px" width="8" height="7" viewBox="0 0 8 7"><use href="#foldo"/></svg>
<div class="t" style="left:25.7px;top:394.20px;font-size:6.6px;color:#c4c4c4">FBX</div>
<svg class="a" style="left:18px;top:403.5px" width="4.5" height="3.5" viewBox="0 0 4.5 3.5"><path d="M0 0h4.5L2.25 3.5z" fill="#7a7a7a"/></svg>
<svg class="a" style="left:23.5px;top:401.8px" width="8" height="7" viewBox="0 0 8 7"><use href="#foldo"/></svg>
<div class="t" style="left:33px;top:402.70px;font-size:6.6px;color:#c4c4c4">FBX_07_Item</div>
<svg class="a" style="left:25.7px;top:412.0px" width="4.5" height="3.5" viewBox="0 0 4.5 3.5"><path d="M0 0h4.5L2.25 3.5z" fill="#7a7a7a"/></svg>
<svg class="a" style="left:31.3px;top:410.3px" width="8" height="7" viewBox="0 0 8 7"><use href="#foldo"/></svg>
<div class="t" style="left:40.8px;top:411.20px;font-size:6.6px;color:#c4c4c4">Texture</div>
<svg class="a" style="left:38.5px;top:418.8px" width="7" height="7" viewBox="0 0 7 7"><use href="#fold"/></svg>
<div class="t" style="left:48px;top:419.70px;font-size:6.6px;color:#c4c4c4">Materials</div>
<svg class="a" style="left:10.5px;top:429.0px" width="4.5" height="3.5" viewBox="0 0 4.5 3.5"><path d="M0 0h4.5L2.25 3.5z" fill="#7a7a7a"/></svg>
<svg class="a" style="left:16.2px;top:427.3px" width="8" height="7" viewBox="0 0 8 7"><use href="#foldo"/></svg>
<div class="t" style="left:25.7px;top:428.20px;font-size:6.6px;color:#c4c4c4">Prefabs</div>
<svg class="a" style="left:23.5px;top:435.8px" width="7" height="7" viewBox="0 0 7 7"><use href="#fold"/></svg>
<div class="t" style="left:33px;top:436.70px;font-size:6.6px;color:#c4c4c4">Prefabs_07_Item</div>
<svg class="a" style="left:16.2px;top:444.3px" width="7" height="7" viewBox="0 0 7 7"><use href="#fold"/></svg>
<div class="t" style="left:25.7px;top:445.20px;font-size:6.6px;color:#c4c4c4">Scenes</div>
<svg class="a" style="left:16.2px;top:452.8px" width="7" height="7" viewBox="0 0 7 7"><use href="#fold"/></svg>
<div class="t" style="left:25.7px;top:453.70px;font-size:6.6px;color:#c4c4c4">Settings</div>
<svg class="a" style="left:11.0px;top:462.5px" width="3.5" height="4.5" viewBox="0 0 3.5 4.5"><path d="M0 0v4.5L3.5 2.25z" fill="#7a7a7a"/></svg>
<svg class="a" style="left:16.2px;top:461.3px" width="7" height="7" viewBox="0 0 7 7"><use href="#fold"/></svg>
<div class="t" style="left:25.7px;top:462.20px;font-size:6.6px;color:#c4c4c4">TextMesh Pro</div>
<svg class="a" style="left:11.0px;top:471.0px" width="3.5" height="4.5" viewBox="0 0 3.5 4.5"><path d="M0 0v4.5L3.5 2.25z" fill="#7a7a7a"/></svg>
<svg class="a" style="left:16.2px;top:469.8px" width="7" height="7" viewBox="0 0 7 7"><use href="#fold"/></svg>
<div class="t" style="left:25.7px;top:470.70px;font-size:6.6px;color:#c4c4c4">TutorialInfo</div>
<svg class="a" style="left:2.5px;top:479.5px" width="3.5" height="4.5" viewBox="0 0 3.5 4.5"><path d="M0 0v4.5L3.5 2.25z" fill="#7a7a7a"/></svg>
<svg class="a" style="left:9.5px;top:478.3px" width="7" height="7" viewBox="0 0 7 7"><use href="#fold"/></svg>
<div class="t b" style="left:19px;top:479.20px;font-size:6.6px;color:#d0d0d0">Packages</div>
<div class="a" style="left:635px;top:54px;width:389.00px;height:484.00px;background:#383838;"></div>
<div class="a" style="left:635px;top:55px;width:382px;height:8px;overflow:hidden">
<div class="t jp" style="left:16px;top:-2.9px;font-size:6.6px;color:#b0b0b0">レンダリングレイヤーマスク</div>
<div class="a" style="left:165px;top:-3px;width:214px;height:6.7px;background:#4a4a4a;border-radius:1.5px"></div>
<div class="t" style="left:168px;top:-3.4px;font-size:6.6px;color:#c8c8c8">Default</div>
</div>
<div class="a" style="left:635px;top:63px;width:382.00px;height:32.00px;background:#3e3e3e;"></div>
<div class="a" style="left:635px;top:62.5px;width:382.00px;height:0.80px;background:#2b2b2b;"></div>
<div class="a" style="left:635px;top:95px;width:382.00px;height:0.80px;background:#262626;"></div>
<div class="a" style="left:643.7px;top:66.9px;width:17.1px;height:17.5px;background:radial-gradient(circle at 50% 58%,#e0e0e0 0,#a0a0a0 22%,#4a4a4a 42%,#909090 58%,#505050 72%,#6a6a6a 100%);border-radius:1px"></div>
<svg class="a" style="left:640px;top:85px" width="5" height="4" viewBox="0 0 5 4"><path d="M0 0h5L2.5 3.5z" fill="#6a6a6a"/></svg>
<div class="t" style="left:665px;top:68.45px;font-size:7.1px;color:#b8b8b8;">TEX_SafetyPin (Material)</div>
<div class="t" style="left:663.6px;top:81.50px;font-size:6.6px;color:#b0b0b0;">Shader</div>
<div class="a" style="left:691px;top:79.9px;width:271.75px;height:8.10px;background:#4a4a4a;border-radius:1.5px"></div>
<div class="t" style="left:694px;top:81.45px;font-size:6.6px;color:#d0d0d0;">Toon</div>
<div class="a arr" style="left:956.25px;top:82.95px"></div>
<div class="a" style="left:966px;top:79.4px;width:23px;height:8.6px;background:#585858;border-radius:1.5px"></div>
<div class="t" style="left:968px;top:81.10px;font-size:6.6px;color:#d0d0d0;">Edit...</div>
<div class="a" style="left:992px;top:79.4px;width:22.30px;height:8.60px;background:#4e4e4e;border-radius:1.5px"></div>
<div class="a arr" style="left:1007.80px;top:82.70px"></div>
<svg class="a" style="left:996px;top:81.2px" width="6" height="5" viewBox="0 0 6 5"><path d="M0 .5h6M1.5 2h4.5M1.5 3.5h4.5M0 .5v4" stroke="#888" stroke-width=".7"/></svg>
<svg class="a" style="left:992.5px;top:67.80px" width="6.5" height="6.5" viewBox="0 0 6.5 6.5"><circle cx="3.25" cy="3.25" r="3.1" fill="#d8d8d8"/><path d="M2.2 2.5a1.05 1.05 0 1 1 1.5.95c-.4.2-.45.4-.45.8" fill="none" stroke="#383838" stroke-width=".8"/><rect x="2.85" y="4.7" width=".8" height=".8" fill="#383838"/></svg>
<svg class="a" style="left:1001px;top:67.8px" width="7" height="6.5" viewBox="0 0 7 6.5"><path d="M.5 2h5.5M4.5.5 6 2M6.5 4.5H1M2.5 3 1 4.5 2.5 6" fill="none" stroke="#d0d0d0" stroke-width=".8"/></svg>
<div class="a dots" style="left:1012.5px;top:68px"></div>
<div class="t" style="left:653.4px;top:102.30px;font-size:6.6px;color:#b8b8b8;">Mode</div>
<div class="a" style="left:808.6px;top:100.8px;width:205.40px;height:8.20px;background:#4a4a4a;border-radius:1.5px"></div>
<div class="t" style="left:811.6px;top:102.40px;font-size:6.6px;color:#d0d0d0;">Standard</div>
<div class="a arr" style="left:1007.50px;top:103.90px"></div>
<div class="a" style="left:635px;top:110.8px;width:382.00px;height:0.80px;background:#2a2a2a;"></div>
<div class="a" style="left:635px;top:111.4px;width:382.00px;height:8.90px;background:#353535;"></div>
<div class="a" style="left:635px;top:111.4px;width:382.00px;height:0.80px;background:#2a2a2a;"></div>
<svg class="a" style="left:646.5px;top:113.55px" width="3.5" height="4.5" viewBox="0 0 3.5 4.5"><path d="M0 0v4.5L3.5 2.25z" fill="#8a8a8a"/></svg>
<div class="t b jp" style="left:653px;top:113.50px;font-size:6.5px;color:#d4d4d4;">シェーダー設定</div>
<svg class="a" style="left:997px;top:112.65px" width="6.5" height="6.5" viewBox="0 0 6.5 6.5"><circle cx="3.25" cy="3.25" r="3.1" fill="#d8d8d8"/><path d="M2.2 2.5a1.05 1.05 0 1 1 1.5.95c-.4.2-.45.4-.45.8" fill="none" stroke="#383838" stroke-width=".8"/><rect x="2.85" y="4.7" width=".8" height=".8" fill="#383838"/></svg>
<div class="a" style="left:635px;top:120.3px;width:382.00px;height:9.30px;background:#353535;"></div>
<div class="a" style="left:635px;top:120.3px;width:382.00px;height:0.80px;background:#2a2a2a;"></div>
<svg class="a" style="left:646px;top:123.15px" width="4.5" height="3.5" viewBox="0 0 4.5 3.5"><path d="M0 0h4.5L2.25 3.5z" fill="#8a8a8a"/></svg>
<div class="t b" style="left:653px;top:122.60px;font-size:6.5px;color:#d4d4d4;">Three Color and Control Map Settings</div>
<svg class="a" style="left:997px;top:121.75px" width="6.5" height="6.5" viewBox="0 0 6.5 6.5"><circle cx="3.25" cy="3.25" r="3.1" fill="#d8d8d8"/><path d="M2.2 2.5a1.05 1.05 0 1 1 1.5.95c-.4.2-.45.4-.45.8" fill="none" stroke="#383838" stroke-width=".8"/><rect x="2.85" y="4.7" width=".8" height=".8" fill="#383838"/></svg>
<div class="a" style="left:662.6px;top:132px;width:9px;height:9px;background:#3a3a3a"></div>
<svg class="a" style="left:663px;top:132.5px" width="8" height="8" viewBox="0 0 8 8"><path d="M1 1h3v6H1zM4.5 .5h2.5v7H4.5z" fill="#bdbdbd"/><path d="M2 2h1.2M2 3.5h1.2M5.2 2h1.2M5.2 4h1.2M5.2 6h1.2" stroke="#555" stroke-width=".6"/></svg>
<div class="a" style="left:674px;top:134.60px;width:4px;height:4px;border-radius:50%;border:.7px solid #aaa"></div>
<div class="t" style="left:678.8px;top:134.10px;font-size:6.6px;color:#bdbdbd;">Base Map</div>
<div class="a" style="left:808.6px;top:131.1px;width:194.40px;height:9.00px;background:#ffffff;"></div>
<div class="a" style="left:1004.5px;top:131.1px;width:8.5px;height:9.00px;background:#3e3e3e;border-radius:1px"></div>
<svg class="a" style="left:1005.5px;top:132.10px" width="7" height="7" viewBox="0 0 7 7"><path d="M1 6 4.2 2.8" stroke="#e0e0e0" stroke-width="1"/><path d="M3.6 1.6 5.2.4 6.6 1.8 5.4 3.4z" fill="#e0e0e0"/><path d="M3.3 1.8 5.2 3.7" stroke="#e0e0e0" stroke-width=".8"/></svg>
<div class="t" style="left:678.8px;top:145.00px;font-size:6.6px;color:#bdbdbd;">Apply to 1st shading map</div>
<div class="a" style="left:809.3px;top:144.00px;width:7.7px;height:7.8px;background:#2a2a2a;border-radius:1px;border:.6px solid #232323"></div>
<svg class="a" style="left:810.3px;top:144.90px" width="6" height="6" viewBox="0 0 6 6"><path d="M.9 3.1 2.3 4.5 5.1 1.3" fill="none" stroke="#f0f0f0" stroke-width="1.1"/></svg>
<div class="t" style="left:678.8px;top:155.80px;font-size:6.6px;color:#bdbdbd;">1st Shading Map</div>
<div class="a" style="left:808.6px;top:153.6px;width:194.40px;height:9.40px;background:#c9c9c9;"></div>
<div class="a" style="left:808.6px;top:161px;width:194.40px;height:2.00px;background:#ffffff;"></div>
<div class="a" style="left:1004.5px;top:153.6px;width:8.5px;height:9.40px;background:#3e3e3e;border-radius:1px"></div>
<svg class="a" style="left:1005.5px;top:154.60px" width="7" height="7" viewBox="0 0 7 7"><path d="M1 6 4.2 2.8" stroke="#e0e0e0" stroke-width="1"/><path d="M3.6 1.6 5.2.4 6.6 1.8 5.4 3.4z" fill="#e0e0e0"/><path d="M3.3 1.8 5.2 3.7" stroke="#e0e0e0" stroke-width=".8"/></svg>
<div class="t" style="left:678.8px;top:166.50px;font-size:6.6px;color:#bdbdbd;">Apply to 2nd shading map</div>
<div class="a" style="left:809.3px;top:164.90px;width:7.7px;height:7.8px;background:#2a2a2a;border-radius:1px;border:.6px solid #232323"></div>
<div class="a" style="left:662.6px;top:176px;width:9px;height:8.5px;background:#444"></div>
<div class="a" style="left:674px;top:178.00px;width:4px;height:4px;border-radius:50%;border:.7px solid #aaa"></div>
<div class="t" style="left:678.8px;top:177.50px;font-size:6.6px;color:#bdbdbd;">2nd Shading Map</div>
<div class="a" style="left:808.6px;top:175px;width:194.40px;height:9.40px;background:#ffffff;"></div>
<div class="a" style="left:1004.5px;top:175px;width:8.5px;height:9.40px;background:#3e3e3e;border-radius:1px"></div>
<svg class="a" style="left:1005.5px;top:176.00px" width="7" height="7" viewBox="0 0 7 7"><path d="M1 6 4.2 2.8" stroke="#e0e0e0" stroke-width="1"/><path d="M3.6 1.6 5.2.4 6.6 1.8 5.4 3.4z" fill="#e0e0e0"/><path d="M3.3 1.8 5.2 3.7" stroke="#e0e0e0" stroke-width=".8"/></svg>
<div class="t jp" style="left:662.7px;top:193.40px;font-size:6.4px;color:#cacaca;">タイリング</div>
<div class="t" style="left:810.5px;top:192.95px;font-size:6.5px;color:#a8a8a8;">X</div>
<div class="a" style="left:816.5px;top:191.1px;width:93.20px;height:9.00px;background:#2a2a2a;border-radius:1.5px"></div>
<div class="t" style="left:818.3px;top:193.15px;font-size:6.5px;color:#d0d0d0;">1</div>
<div class="t" style="left:913.8px;top:192.95px;font-size:6.5px;color:#a8a8a8;">Y</div>
<div class="a" style="left:919.8px;top:191.1px;width:93.20px;height:9.00px;background:#2a2a2a;border-radius:1.5px"></div>
<div class="t" style="left:921.5999999999999px;top:193.15px;font-size:6.5px;color:#d0d0d0;">1</div>
<div class="t jp" style="left:662.7px;top:204.00px;font-size:6.4px;color:#cacaca;">オフセット</div>
<div class="t" style="left:810.5px;top:203.75px;font-size:6.5px;color:#a8a8a8;">X</div>
<div class="a" style="left:816.5px;top:201.9px;width:93.20px;height:9.00px;background:#2a2a2a;border-radius:1.5px"></div>
<div class="t" style="left:818.3px;top:203.95px;font-size:6.5px;color:#d0d0d0;">0</div>
<div class="t" style="left:913.8px;top:203.75px;font-size:6.5px;color:#a8a8a8;">Y</div>
<div class="a" style="left:919.8px;top:201.9px;width:93.20px;height:9.00px;background:#2a2a2a;border-radius:1.5px"></div>
<div class="t" style="left:921.5999999999999px;top:203.95px;font-size:6.5px;color:#d0d0d0;">0</div>
<svg class="a" style="left:657px;top:215.80px" width="3.5" height="4.5" viewBox="0 0 3.5 4.5"><path d="M0 0v4.5L3.5 2.25z" fill="#7a7a7a"/></svg>
<div class="t" style="left:661.3px;top:215.40px;font-size:6.6px;color:#bdbdbd;">Shadow Control Maps</div>
<div class="a" style="left:635px;top:229px;width:382.00px;height:9.80px;background:#353535;"></div>
<div class="a" style="left:635px;top:229px;width:382.00px;height:0.80px;background:#2a2a2a;"></div>
<svg class="a" style="left:646px;top:232.10px" width="4.5" height="3.5" viewBox="0 0 4.5 3.5"><path d="M0 0h4.5L2.25 3.5z" fill="#8a8a8a"/></svg>
<div class="t b" style="left:653px;top:231.55px;font-size:6.5px;color:#d4d4d4;">Shading Step and Feather Settings</div>
<svg class="a" style="left:997px;top:230.70px" width="6.5" height="6.5" viewBox="0 0 6.5 6.5"><circle cx="3.25" cy="3.25" r="3.1" fill="#d8d8d8"/><path d="M2.2 2.5a1.05 1.05 0 1 1 1.5.95c-.4.2-.45.4-.45.8" fill="none" stroke="#383838" stroke-width=".8"/><rect x="2.85" y="4.7" width=".8" height=".8" fill="#383838"/></svg>
<div class="t b" style="left:663px;top:242.30px;font-size:6.6px;color:#d0d0d0;">Mode: Standard</div>
<div class="t" style="left:663px;top:252.80px;font-size:6.6px;color:#bdbdbd;">Base Color Step</div>
<div class="a" style="left:809.3px;top:254.8px;width:174.50px;height:1.00px;background:#5e5e5e;"></div>
<div class="a" style="left:893.40px;top:252.30px;width:6px;height:6px;border-radius:50%;background:#b0b0b0"></div>
<div class="a" style="left:986.7px;top:250.5px;width:26.30px;height:9.40px;background:#2a2a2a;border-radius:1.5px"></div>
<div class="t" style="left:988.5px;top:252.75px;font-size:6.5px;color:#d0d0d0;">0.5</div>
<div class="t" style="left:663px;top:263.30px;font-size:6.6px;color:#bdbdbd;">Base Shading Feather</div>
<div class="a" style="left:809.3px;top:265.5px;width:174.50px;height:1.00px;background:#5e5e5e;"></div>
<div class="a" style="left:851.20px;top:263.00px;width:6px;height:6px;border-radius:50%;background:#b0b0b0"></div>
<div class="a" style="left:986.7px;top:261.2px;width:26.30px;height:9.40px;background:#2a2a2a;border-radius:1.5px"></div>
<div class="t" style="left:988.5px;top:263.45px;font-size:6.5px;color:#d0d0d0;">0.25</div>
<div class="t" style="left:663px;top:273.90px;font-size:6.6px;color:#bdbdbd;">Shading Color Step</div>
<div class="a" style="left:809.3px;top:276.1px;width:174.50px;height:1.00px;background:#5e5e5e;"></div>
<div class="a" style="left:809.40px;top:273.60px;width:6px;height:6px;border-radius:50%;background:#b0b0b0"></div>
<div class="a" style="left:986.7px;top:271.8px;width:26.30px;height:9.40px;background:#2a2a2a;border-radius:1.5px"></div>
<div class="t" style="left:988.5px;top:274.05px;font-size:6.5px;color:#d0d0d0;">0</div>
<div class="t" style="left:663px;top:284.70px;font-size:6.6px;color:#bdbdbd;">1st/2nd Shading Feather</div>
<div class="a" style="left:809.3px;top:286.7px;width:174.50px;height:1.00px;background:#5e5e5e;"></div>
<div class="a" style="left:809.40px;top:284.20px;width:6px;height:6px;border-radius:50%;background:#b0b0b0"></div>
<div class="a" style="left:986.7px;top:282.4px;width:26.30px;height:9.40px;background:#2a2a2a;border-radius:1.5px"></div>
<div class="t" style="left:988.5px;top:284.65px;font-size:6.5px;color:#d0d0d0;">0.0001</div>
<div class="t" style="left:663px;top:299.50px;font-size:6.6px;color:#bdbdbd;">Receive Shadows</div>
<div class="a" style="left:809.3px;top:298.40px;width:7.7px;height:7.8px;background:#2a2a2a;border-radius:1px;border:.6px solid #232323"></div>
<svg class="a" style="left:810.3px;top:299.30px" width="6" height="6" viewBox="0 0 6 6"><path d="M.9 3.1 2.3 4.5 5.1 1.3" fill="none" stroke="#f0f0f0" stroke-width="1.1"/></svg>
<div class="t" style="left:671px;top:310.20px;font-size:6.6px;color:#bdbdbd;">System Shadow Level</div>
<div class="a" style="left:809.3px;top:312.5px;width:174.50px;height:1.00px;background:#5e5e5e;"></div>
<div class="a" style="left:893.40px;top:310.00px;width:6px;height:6px;border-radius:50%;background:#b0b0b0"></div>
<div class="a" style="left:986.7px;top:308.2px;width:26.30px;height:9.40px;background:#2a2a2a;border-radius:1.5px"></div>
<div class="t" style="left:988.5px;top:310.45px;font-size:6.5px;color:#d0d0d0;">0</div>
<svg class="a" style="left:657px;top:327.90px" width="3.5" height="4.5" viewBox="0 0 3.5 4.5"><path d="M0 0v4.5L3.5 2.25z" fill="#7a7a7a"/></svg>
<div class="t" style="left:661.3px;top:327.50px;font-size:6.6px;color:#bdbdbd;">Point Light Settings</div>
<div class="a" style="left:635px;top:340.8px;width:382.00px;height:9.80px;background:#353535;"></div>
<div class="a" style="left:635px;top:340.8px;width:382.00px;height:0.80px;background:#2a2a2a;"></div>
<svg class="a" style="left:646.5px;top:343.40px" width="3.5" height="4.5" viewBox="0 0 3.5 4.5"><path d="M0 0v4.5L3.5 2.25z" fill="#8a8a8a"/></svg>
<div class="t b" style="left:653px;top:343.35px;font-size:6.5px;color:#d4d4d4;">Normal Map Settings</div>
<svg class="a" style="left:997px;top:342.50px" width="6.5" height="6.5" viewBox="0 0 6.5 6.5"><circle cx="3.25" cy="3.25" r="3.1" fill="#d8d8d8"/><path d="M2.2 2.5a1.05 1.05 0 1 1 1.5.95c-.4.2-.45.4-.45.8" fill="none" stroke="#383838" stroke-width=".8"/><rect x="2.85" y="4.7" width=".8" height=".8" fill="#383838"/></svg>
<div class="a" style="left:635px;top:350.6px;width:382.00px;height:9.60px;background:#353535;"></div>
<div class="a" style="left:635px;top:350.6px;width:382.00px;height:0.80px;background:#2a2a2a;"></div>
<svg class="a" style="left:646.5px;top:353.10px" width="3.5" height="4.5" viewBox="0 0 3.5 4.5"><path d="M0 0v4.5L3.5 2.25z" fill="#8a8a8a"/></svg>
<div class="t b" style="left:653px;top:353.05px;font-size:6.5px;color:#d4d4d4;">Highlight Settings</div>
<svg class="a" style="left:997px;top:352.20px" width="6.5" height="6.5" viewBox="0 0 6.5 6.5"><circle cx="3.25" cy="3.25" r="3.1" fill="#d8d8d8"/><path d="M2.2 2.5a1.05 1.05 0 1 1 1.5.95c-.4.2-.45.4-.45.8" fill="none" stroke="#383838" stroke-width=".8"/><rect x="2.85" y="4.7" width=".8" height=".8" fill="#383838"/></svg>
<div class="a" style="left:635px;top:360.2px;width:382.00px;height:9.70px;background:#353535;"></div>
<div class="a" style="left:635px;top:360.2px;width:382.00px;height:0.80px;background:#2a2a2a;"></div>
<svg class="a" style="left:646.5px;top:362.75px" width="3.5" height="4.5" viewBox="0 0 3.5 4.5"><path d="M0 0v4.5L3.5 2.25z" fill="#8a8a8a"/></svg>
<div class="t b" style="left:653px;top:362.70px;font-size:6.5px;color:#d4d4d4;">Rim Light Settings</div>
<svg class="a" style="left:997px;top:361.85px" width="6.5" height="6.5" viewBox="0 0 6.5 6.5"><circle cx="3.25" cy="3.25" r="3.1" fill="#d8d8d8"/><path d="M2.2 2.5a1.05 1.05 0 1 1 1.5.95c-.4.2-.45.4-.45.8" fill="none" stroke="#383838" stroke-width=".8"/><rect x="2.85" y="4.7" width=".8" height=".8" fill="#383838"/></svg>
<div class="a" style="left:635px;top:369.9px;width:382.00px;height:9.70px;background:#353535;"></div>
<div class="a" style="left:635px;top:369.9px;width:382.00px;height:0.80px;background:#2a2a2a;"></div>
<svg class="a" style="left:646px;top:372.95px" width="4.5" height="3.5" viewBox="0 0 4.5 3.5"><path d="M0 0h4.5L2.25 3.5z" fill="#8a8a8a"/></svg>
<div class="t b" style="left:653px;top:372.40px;font-size:6.5px;color:#d4d4d4;">Material Capture (MatCap) Settings</div>
<svg class="a" style="left:997px;top:371.55px" width="6.5" height="6.5" viewBox="0 0 6.5 6.5"><circle cx="3.25" cy="3.25" r="3.1" fill="#d8d8d8"/><path d="M2.2 2.5a1.05 1.05 0 1 1 1.5.95c-.4.2-.45.4-.45.8" fill="none" stroke="#383838" stroke-width=".8"/><rect x="2.85" y="4.7" width=".8" height=".8" fill="#383838"/></svg>
<div class="t" style="left:663px;top:383.00px;font-size:6.6px;color:#bdbdbd;">MatCap</div>
<div class="a" style="left:809.3px;top:381.70px;width:7.7px;height:7.8px;background:#2a2a2a;border-radius:1px;border:.6px solid #232323"></div>
<svg class="a" style="left:810.3px;top:382.60px" width="6" height="6" viewBox="0 0 6 6"><path d="M.9 3.1 2.3 4.5 5.1 1.3" fill="none" stroke="#f0f0f0" stroke-width="1.1"/></svg>
<div class="a" style="left:662.8px;top:392px;width:8.5px;height:9px;background:#050505"></div>
<div class="a" style="left:664.5px;top:394px;width:5px;height:5px;border-radius:50%;background:radial-gradient(circle,#fff 0,#fff 30%,#888 60%,#050505 100%)"></div>
<div class="a" style="left:674px;top:394.40px;width:4px;height:4px;border-radius:50%;border:.7px solid #aaa"></div>
<div class="t" style="left:678.8px;top:393.90px;font-size:6.6px;color:#bdbdbd;">MatCap Map</div>
<div class="a" style="left:808.6px;top:392px;width:194.40px;height:9.00px;background:#ffffff;"></div>
<div class="a" style="left:1004.5px;top:392px;width:8.5px;height:9.00px;background:#3e3e3e;border-radius:1px"></div>
<svg class="a" style="left:1005.5px;top:393.00px" width="7" height="7" viewBox="0 0 7 7"><path d="M1 6 4.2 2.8" stroke="#e0e0e0" stroke-width="1"/><path d="M3.6 1.6 5.2.4 6.6 1.8 5.4 3.4z" fill="#e0e0e0"/><path d="M3.3 1.8 5.2 3.7" stroke="#e0e0e0" stroke-width=".8"/></svg>
<div class="t jp" style="left:670.6px;top:405.10px;font-size:6.4px;color:#cacaca;">タイリング</div>
<div class="t" style="left:810.5px;top:404.75px;font-size:6.5px;color:#a8a8a8;">X</div>
<div class="a" style="left:816.5px;top:402.9px;width:93.20px;height:9.00px;background:#2a2a2a;border-radius:1.5px"></div>
<div class="t" style="left:818.3px;top:404.95px;font-size:6.5px;color:#d0d0d0;">1</div>
<div class="t" style="left:913.8px;top:404.75px;font-size:6.5px;color:#a8a8a8;">Y</div>
<div class="a" style="left:919.8px;top:402.9px;width:93.20px;height:9.00px;background:#2a2a2a;border-radius:1.5px"></div>
<div class="t" style="left:921.5999999999999px;top:404.95px;font-size:6.5px;color:#d0d0d0;">1</div>
<div class="t jp" style="left:670.6px;top:415.60px;font-size:6.4px;color:#cacaca;">オフセット</div>
<div class="t" style="left:810.5px;top:415.35px;font-size:6.5px;color:#a8a8a8;">X</div>
<div class="a" style="left:816.5px;top:413.5px;width:93.20px;height:9.00px;background:#2a2a2a;border-radius:1.5px"></div>
<div class="t" style="left:818.3px;top:415.55px;font-size:6.5px;color:#d0d0d0;">0</div>
<div class="t" style="left:913.8px;top:415.35px;font-size:6.5px;color:#a8a8a8;">Y</div>
<div class="a" style="left:919.8px;top:413.5px;width:93.20px;height:9.00px;background:#2a2a2a;border-radius:1.5px"></div>
<div class="t" style="left:921.5999999999999px;top:415.55px;font-size:6.5px;color:#d0d0d0;">0</div>
<div class="t" style="left:670.6px;top:427.50px;font-size:6.6px;color:#bdbdbd;">MatCap Blur Level</div>
<div class="a" style="left:809.3px;top:429.5px;width:174.50px;height:1.00px;background:#5e5e5e;"></div>
<div class="a" style="left:809.40px;top:427.00px;width:6px;height:6px;border-radius:50%;background:#b0b0b0"></div>
<div class="a" style="left:986.7px;top:425.2px;width:26.30px;height:9.40px;background:#2a2a2a;border-radius:1.5px"></div>
<div class="t" style="left:988.5px;top:427.45px;font-size:6.5px;color:#d0d0d0;">0</div>
<div class="t" style="left:670.6px;top:437.80px;font-size:6.6px;color:#bdbdbd;">Color Blending Mode</div>
<div class="a" style="left:808.6px;top:436px;width:204.40px;height:9.00px;background:#4a4a4a;border-radius:1.5px"></div>
<div class="t" style="left:811.6px;top:438.00px;font-size:6.6px;color:#d0d0d0;">Add</div>
<div class="a arr" style="left:1006.50px;top:439.50px"></div>
<div class="a" style="left:1017px;top:54px;width:7.00px;height:387.30px;background:#2e2e2e;"></div>
<div class="a" style="left:1018.6px;top:176.5px;width:4.40px;height:119.50px;background:#5a5a5a;border-radius:2px"></div>
<svg class="a" style="left:1018.5px;top:59.5px" width="5" height="3" viewBox="0 0 5 3"><path d="M0 3h5L2.5 0z" fill="#c8c8c8"/></svg>
<svg class="a" style="left:1018.5px;top:435.5px" width="5" height="3" viewBox="0 0 5 3"><path d="M0 0h5L2.5 3z" fill="#c8c8c8"/></svg>
<div class="a" style="left:635px;top:441.3px;width:389.00px;height:11.10px;background:#3c3c3c;"></div>
<div class="a" style="left:635px;top:441.3px;width:389.00px;height:0.80px;background:#2a2a2a;"></div>
<div class="t b" style="left:639px;top:444.30px;font-size:6.6px;color:#d6d6d6;">SafetyPin_unlock</div>
<div class="a" style="left:696px;top:445px;width:318.00px;height:3.00px;background:#333;border:.5px solid #2a2a2a"></div>
<div class="a dots" style="left:1019.5px;top:444px"></div>
<div class="a" style="left:635px;top:452.4px;width:389.00px;height:58.60px;background:#525252;"></div>
<svg class="a" style="left:800px;top:470px" width="60" height="28" viewBox="800 470 60 28"><g fill="none">
<path d="M804.5 480.6 C815 479.8, 832 480, 848 481.2" stroke="#3a3a3a" stroke-width="1.9"/>
<path d="M804.5 481 C813 484.5, 826 487.5, 838.5 489.8" stroke="#3a3a3a" stroke-width="1.9"/>
<path d="M842.5 486 C848 484, 852.5 486, 852 489 C851.5 492, 845 492.5, 838.5 490" stroke="#3a3a3a" stroke-width="2.6"/>
<path d="M804.5 480.6 C815 479.8, 832 480, 848 481.2" stroke="#c0c0c0" stroke-width="1"/>
<path d="M804.5 481 C813 484.5, 826 487.5, 838.5 489.8" stroke="#b0b0b0" stroke-width="1"/>
<path d="M842.5 486 C848 484, 852.5 486, 852 489 C851.5 492, 845 492.5, 838.5 490" stroke="#b4b4b4" stroke-width="1.5"/>
</g></svg>
<div class="a" style="left:635px;top:511px;width:389.00px;height:15.40px;background:#3b3b3b;"></div>
<div class="a" style="left:635px;top:511px;width:389.00px;height:0.80px;background:#2c2c2c;"></div>
<svg class="a" style="left:1009.5px;top:515px" width="9" height="8" viewBox="0 0 9 8"><circle cx="4.5" cy="4" r="4" fill="#3d6bb0"/><path d="M3 2h3v2.5L4 6.5 2 4.5z" fill="#e8e8e8"/></svg>
<div class="t jp" style="left:638px;top:529.25px;font-size:6.3px;color:#a8a8a8;">アセットバンドル</div>
<div class="a" style="left:686px;top:526.9px;width:258.00px;height:8.90px;background:#4a4a4a;border-radius:1.5px"></div>
<div class="t" style="left:689px;top:528.85px;font-size:6.6px;color:#d0d0d0;">None</div>
<div class="a arr" style="left:937.50px;top:530.35px"></div>
<div class="a" style="left:948px;top:526.9px;width:74.00px;height:8.90px;background:#4a4a4a;border-radius:1.5px"></div>
<div class="t" style="left:951px;top:528.85px;font-size:6.6px;color:#d0d0d0;">None</div>
<div class="a arr" style="left:1015.50px;top:530.35px"></div>
<div class="a" style="left:634px;top:54px;width:1.00px;height:484.00px;background:#232323;"></div>
<!-- status bar -->
<div class="a" style="left:0;top:538px;width:1024px;height:12px;background:#191919"></div>
<svg class="a" style="left:983.5px;top:540.5px" width="8" height="8" viewBox="0 0 8 8"><ellipse cx="4" cy="4.5" rx="2.3" ry="2.8" fill="#bbb"/><path d="M.5 2 2 3M7.5 2 6 3M.3 4.5h1.5M6.2 4.5h1.5M.5 7 2 6M7.5 7 6 6M.5.5 7.5 7.5" stroke="#bbb" stroke-width=".7"/></svg>
<svg class="a" style="left:998.5px;top:540.5px" width="8" height="8" viewBox="0 0 8 8"><ellipse cx="4" cy="2" rx="3.3" ry="1.5" fill="#ccc"/><path d="M.7 3.5c0 2 6.6 2 6.6 0M.7 5.5c0 2 6.6 2 6.6 0M.5.5 7.5 7.5" fill="none" stroke="#ccc" stroke-width=".8"/></svg>
<svg class="a" style="left:1012.5px;top:540.5px" width="8" height="8" viewBox="0 0 8 8"><circle cx="4" cy="4" r="3.3" fill="none" stroke="#ccc" stroke-width=".8"/><path d="M2.3 4.1 3.5 5.2 5.8 2.8" fill="none" stroke="#ccc" stroke-width=".8"/></svg>
</body></html>
